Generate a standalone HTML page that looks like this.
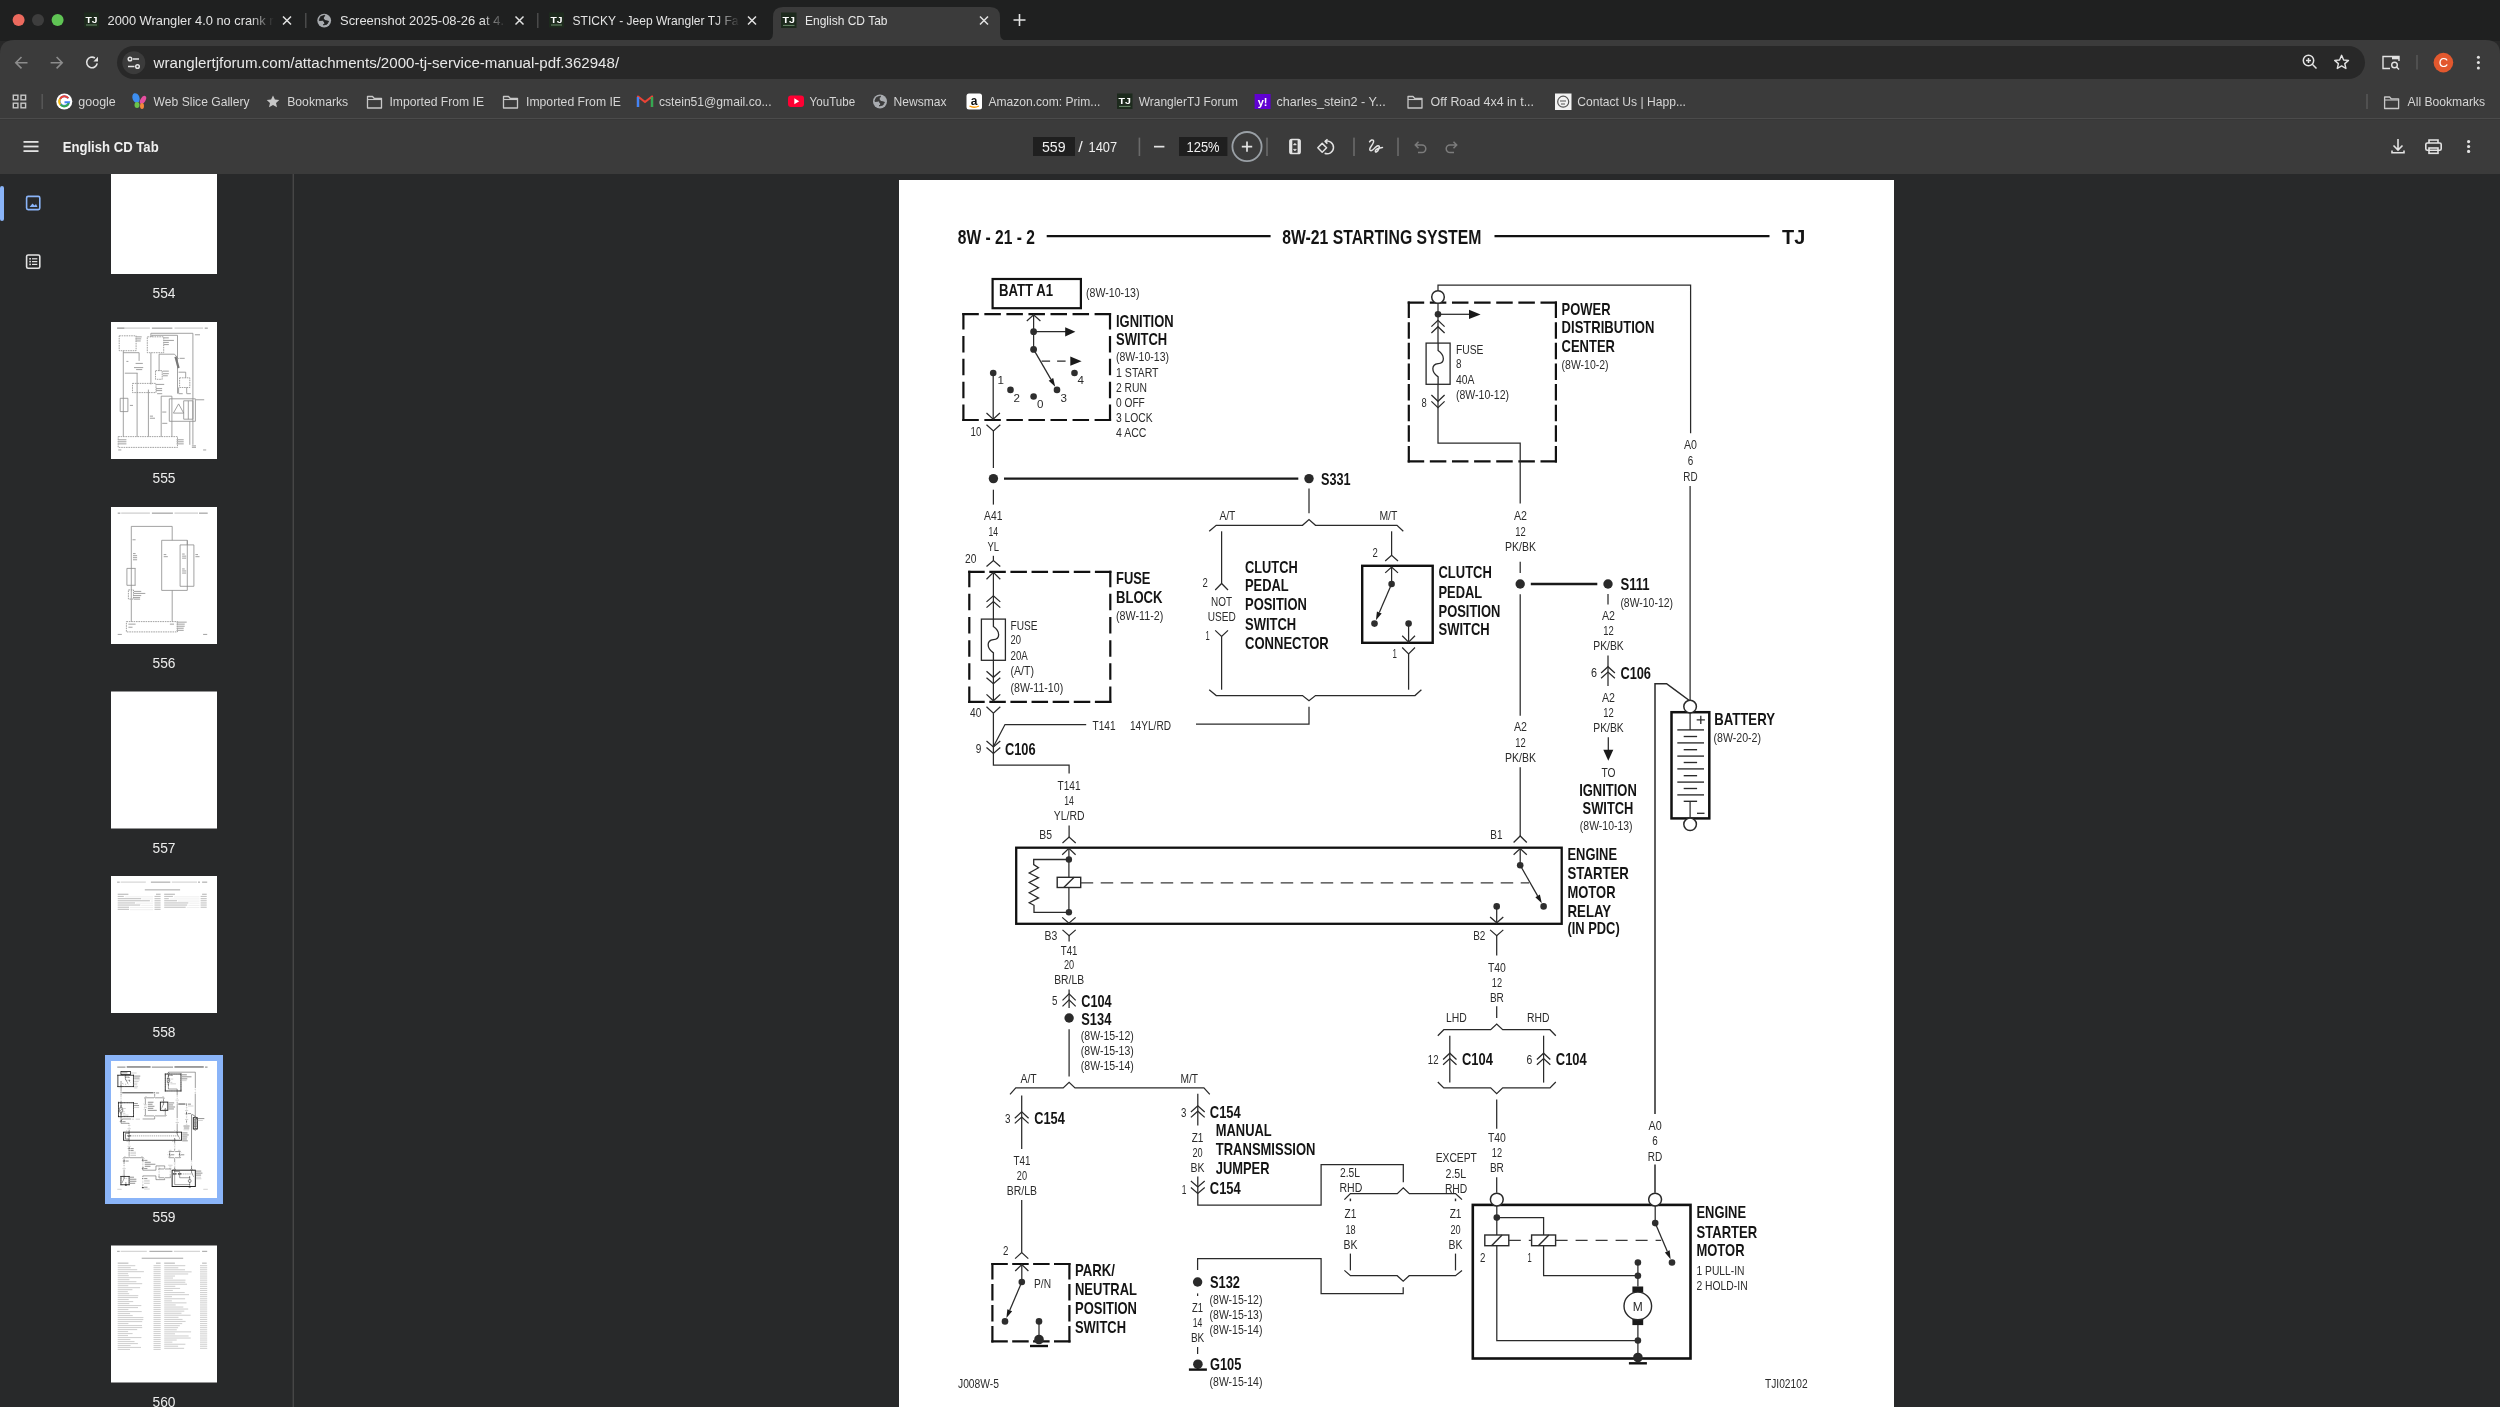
<!DOCTYPE html>
<html><head><meta charset="utf-8"><title>English CD Tab</title>
<style>html,body{margin:0;padding:0;background:#282828;overflow:hidden;width:2500px;height:1407px}text{font-family:"Liberation Sans", sans-serif}</style>
</head><body>
<svg width="2500" height="1407" viewBox="0 0 2500 1407" style="display:block;will-change:transform;font-family:'Liberation Sans', sans-serif">
<rect x="0" y="0" width="2500" height="41" fill="#1f2020"/>
<circle cx="18.6" cy="20" r="6" fill="#ec6a5e"/>
<circle cx="38" cy="20" r="6" fill="#3d3d3d"/>
<circle cx="57.6" cy="20" r="6" fill="#5fc454"/>
<defs><linearGradient id="fadeT" x1="0" x2="1"><stop offset="0" stop-color="#1f2020" stop-opacity="0"/><stop offset="1" stop-color="#1f2020" stop-opacity="1"/></linearGradient></defs>
<rect x="84" y="12.5" width="15" height="15" fill="#1d2a1d"/><text x="91.5" y="22.700000000000003" font-size="9.3" font-weight="bold" fill="#fff" text-anchor="middle" textLength="12.0" lengthAdjust="spacingAndGlyphs">TJ</text><rect x="86" y="24.5" width="11" height="1" fill="#6a8a6a"/>
<text x="107.5" y="25" font-size="13.5" fill="#e3e3e3" textLength="166" lengthAdjust="spacingAndGlyphs">2000 Wrangler 4.0 no crank r</text>
<rect x="250" y="8" width="24" height="24" fill="url(#fadeT)"/>
<path d="M283 16.5 L291 24.5 M291 16.5 L283 24.5" stroke="#e3e3e3" stroke-width="1.5"/>
<rect x="305" y="13" width="1.5" height="15" fill="#4a4a4a"/>
<circle cx="324.2" cy="20.6" r="6.9" fill="#a8abaf"/><path d="M319.30 19.70 L320.70 16.60 L324.80 15.30 L323.20 18.10 L324.50 20.30 L323.00 20.20 L319.30 20.60 Z M323.70 20.20 L328.60 21.30 L327.00 24.10 L323.30 25.00 L325.10 23.10 L323.90 21.90 Z" fill="#1f2020" stroke="#1f2020" stroke-width="0.90" stroke-linejoin="round"/>
<text x="340" y="25" font-size="13.5" fill="#e3e3e3" textLength="164" lengthAdjust="spacingAndGlyphs">Screenshot 2025-08-26 at 4.</text>
<rect x="482" y="8" width="24" height="24" fill="url(#fadeT)"/>
<path d="M515.5 16.5 L523.5 24.5 M523.5 16.5 L515.5 24.5" stroke="#e3e3e3" stroke-width="1.5"/>
<rect x="537" y="13" width="1.5" height="15" fill="#4a4a4a"/>
<rect x="549" y="12.5" width="15" height="15" fill="#1d2a1d"/><text x="556.5" y="22.700000000000003" font-size="9.3" font-weight="bold" fill="#fff" text-anchor="middle" textLength="12.0" lengthAdjust="spacingAndGlyphs">TJ</text><rect x="551" y="24.5" width="11" height="1" fill="#6a8a6a"/>
<text x="572.5" y="25" font-size="13.5" fill="#e3e3e3" textLength="166" lengthAdjust="spacingAndGlyphs">STICKY - Jeep Wrangler TJ Fa</text>
<rect x="716" y="8" width="24" height="24" fill="url(#fadeT)"/>
<path d="M748 16.5 L756 24.5 M756 16.5 L748 24.5" stroke="#e3e3e3" stroke-width="1.5"/>
<path d="M765 41 Q773 41 773 33 V17 Q773 7 783 7 H990 Q1000 7 1000 17 V33 Q1000 41 1008 41 Z" fill="#3b3b3b"/>
<rect x="781" y="12.5" width="15.5" height="15.5" fill="#1d2a1d"/><text x="788.75" y="23.04" font-size="9.61" font-weight="bold" fill="#fff" text-anchor="middle" textLength="12.4" lengthAdjust="spacingAndGlyphs">TJ</text><rect x="783" y="24.9" width="11.5" height="1" fill="#6a8a6a"/>
<text x="805" y="25" font-size="13.5" fill="#e8e8e8" textLength="82.5" lengthAdjust="spacingAndGlyphs">English CD Tab</text>
<path d="M980 16.5 L988 24.5 M988 16.5 L980 24.5" stroke="#e3e3e3" stroke-width="1.5"/>
<path d="M1019.5 14 V26 M1013.5 20 H1025.5" stroke="#e3e3e3" stroke-width="1.6"/>
<path d="M0 54 Q0 40 14 40 H2486 Q2500 40 2500 54 V119 H0 Z" fill="#3b3b3b"/>
<path d="M27.5 62.7 H16 M21.5 57 L15.8 62.7 L21.5 68.4" stroke="#8c8c8c" stroke-width="1.6" fill="none"/>
<path d="M50.6 62.7 H62 M56.6 57 L62.2 62.7 L56.6 68.4" stroke="#8c8c8c" stroke-width="1.6" fill="none"/>
<path d="M97.2 63.4 A5.3 5.3 0 1 1 94.9 58" stroke="#e3e3e3" stroke-width="1.6" fill="none"/><path d="M98 56.8 V61.6 L93.4 61.4 Z" fill="#e3e3e3"/>
<rect x="117" y="46" width="2248" height="33" rx="16.5" fill="#282828"/>
<circle cx="133.8" cy="62.7" r="11.5" fill="#3b3b3b"/>
<g stroke="#e3e3e3" stroke-width="1.5" fill="none"><circle cx="130" cy="59" r="1.8"/><path d="M133 59 H139"/><circle cx="137.5" cy="66.5" r="1.8"/><path d="M128 66.5 H134.5"/></g>
<text x="153.6" y="67.8" font-size="15.3" fill="#e8e8e8" textLength="465.5" lengthAdjust="spacingAndGlyphs">wranglertjforum.com/attachments/2000-tj-service-manual-pdf.362948/</text>
<g stroke="#e3e3e3" stroke-width="1.5" fill="none"><circle cx="2308.5" cy="60.5" r="5.2"/><path d="M2312.3 64.3 L2316.5 68.5 M2308.5 58 V63 M2306 60.5 H2311"/></g>
<path d="M2341.6 55.3 L2343.6 60 L2348.5 60.4 L2344.8 63.6 L2345.9 68.5 L2341.6 65.9 L2337.3 68.5 L2338.4 63.6 L2334.7 60.4 L2339.6 60 Z" stroke="#e3e3e3" stroke-width="1.4" fill="none" stroke-linejoin="round"/>
<g stroke="#e3e3e3" stroke-width="1.4" fill="none"><path d="M2390 68.5 H2383 V56.5 H2399 V61"/><circle cx="2394.5" cy="65" r="2.8"/><path d="M2396.6 67.1 L2399 69.5"/></g><rect x="2392" y="56.3" width="7" height="3" fill="#e3e3e3"/>
<rect x="2416.3" y="55" width="1.4" height="14.5" fill="#5a5a5a"/>
<circle cx="2443.4" cy="62.6" r="9.8" fill="#e2582e"/>
<text x="2443.4" y="67.4" font-size="13" fill="#fff" text-anchor="middle">C</text>
<g fill="#e3e3e3"><circle cx="2478.4" cy="57.2" r="1.5"/><circle cx="2478.4" cy="62.6" r="1.5"/><circle cx="2478.4" cy="68" r="1.5"/></g>
<g stroke="#c7c7c7" stroke-width="1.4" fill="none"><rect x="13.3" y="95.2" width="4.6" height="4.6"/><rect x="21" y="95.2" width="4.6" height="4.6"/><rect x="13.3" y="103.2" width="4.6" height="4.6"/><rect x="21" y="103.2" width="4.6" height="4.6"/></g>
<rect x="41.5" y="94" width="1.4" height="15" fill="#5a5a5a"/>
<circle cx="64.3" cy="101.5" r="8" fill="#fff"/>
<path d="M68.3 98.3 A4.8 4.8 0 1 0 69 102.3 H64.5" stroke="#4285f4" stroke-width="2" fill="none"/><path d="M68.3 98.3 A4.8 4.8 0 0 0 60 99" stroke="#ea4335" stroke-width="2" fill="none"/><path d="M60 99 A4.8 4.8 0 0 0 60.5 104.7" stroke="#fbbc05" stroke-width="2" fill="none"/><path d="M60.5 104.7 A4.8 4.8 0 0 0 68.8 103" stroke="#34a853" stroke-width="2" fill="none"/>
<text x="78.3" y="106.2" font-size="13.2" fill="#d5d5d5" textLength="37.5" lengthAdjust="spacingAndGlyphs">google</text>
<ellipse cx="136" cy="98" rx="3.5" ry="5" fill="#3d8ef0" transform="rotate(-20 136 98)"/><ellipse cx="143" cy="100" rx="2.5" ry="4.5" fill="#e54fa0" transform="rotate(30 143 100)"/><ellipse cx="137" cy="105" rx="2.5" ry="3" fill="#6bc24a"/><ellipse cx="142" cy="106" rx="2" ry="3" fill="#f4873b"/>
<text x="153.6" y="106.2" font-size="13.2" fill="#d5d5d5" textLength="96" lengthAdjust="spacingAndGlyphs">Web Slice Gallery</text>
<path d="M273 95.5 L274.9 99.6 L279.3 100 L276 102.9 L277 107.3 L273 105 L269 107.3 L270 102.9 L266.7 100 L271.1 99.6 Z" fill="#c7c7c7"/>
<text x="287.2" y="106.2" font-size="13.2" fill="#d5d5d5" textLength="61" lengthAdjust="spacingAndGlyphs">Bookmarks</text>
<path d="M367.5 96.5 h5 l1.6 1.8 h7.4 v9.7 h-14 z" fill="none" stroke="#c7c7c7" stroke-width="1.3" stroke-linejoin="round"/><path d="M367.5 99.5 h14" stroke="#c7c7c7" stroke-width="1.1"/>
<text x="389.5" y="106.2" font-size="13.2" fill="#d5d5d5" textLength="94.5" lengthAdjust="spacingAndGlyphs">Imported From IE</text>
<path d="M503.5 96.5 h5 l1.6 1.8 h7.4 v9.7 h-14 z" fill="none" stroke="#c7c7c7" stroke-width="1.3" stroke-linejoin="round"/><path d="M503.5 99.5 h14" stroke="#c7c7c7" stroke-width="1.1"/>
<text x="526" y="106.2" font-size="13.2" fill="#d5d5d5" textLength="95" lengthAdjust="spacingAndGlyphs">Imported From IE</text>
<path d="M638 107 V96.5 L645 102 L652 96.5 V107" stroke="#ea4335" stroke-width="2.2" fill="none" stroke-linejoin="round"/><path d="M638 107 V97" stroke="#4285f4" stroke-width="2.4"/><path d="M652 107 V97" stroke="#34a853" stroke-width="2.4"/>
<text x="659" y="106.2" font-size="13.2" fill="#d5d5d5" textLength="112.5" lengthAdjust="spacingAndGlyphs">cstein51@gmail.co...</text>
<rect x="788" y="95.5" width="16" height="11.5" rx="3" fill="#ff0033"/><path d="M794.3 98.2 L799.2 101.2 L794.3 104.2 Z" fill="#fff"/>
<text x="809.6" y="106.2" font-size="13.2" fill="#d5d5d5" textLength="45.5" lengthAdjust="spacingAndGlyphs">YouTube</text>
<circle cx="880" cy="101.5" r="7" fill="#a8abaf"/><path d="M875.03 100.59 L876.45 97.44 L880.61 96.12 L878.99 98.96 L880.30 101.20 L878.78 101.09 L875.03 101.50 Z M879.49 101.09 L884.46 102.21 L882.84 105.05 L879.09 105.96 L880.91 104.04 L879.70 102.82 Z" fill="#3b3b3b" stroke="#3b3b3b" stroke-width="0.91" stroke-linejoin="round"/>
<text x="893.5" y="106.2" font-size="13.2" fill="#d5d5d5" textLength="53" lengthAdjust="spacingAndGlyphs">Newsmax</text>
<rect x="966.5" y="93.5" width="15.5" height="16" rx="2.5" fill="#fff"/><text x="974.2" y="104.5" font-size="12" font-weight="bold" fill="#111" text-anchor="middle">a</text><path d="M969.5 106 Q974 108.5 979 106" stroke="#f90" stroke-width="1.3" fill="none"/>
<text x="988.4" y="106.2" font-size="13.2" fill="#d5d5d5" textLength="112" lengthAdjust="spacingAndGlyphs">Amazon.com: Prim...</text>
<rect x="1117" y="93.5" width="15.5" height="15.5" fill="#1d2a1d"/><text x="1124.75" y="104.04" font-size="9.61" font-weight="bold" fill="#fff" text-anchor="middle" textLength="12.4" lengthAdjust="spacingAndGlyphs">TJ</text><rect x="1119" y="105.9" width="11.5" height="1" fill="#6a8a6a"/>
<text x="1138.8" y="106.2" font-size="13.2" fill="#d5d5d5" textLength="99.2" lengthAdjust="spacingAndGlyphs">WranglerTJ Forum</text>
<rect x="1254.6" y="94" width="16" height="15" fill="#6001d2"/><text x="1262.6" y="105.5" font-size="11" font-weight="bold" fill="#fff" text-anchor="middle">y!</text>
<text x="1276.4" y="106.2" font-size="13.2" fill="#d5d5d5" textLength="109.4" lengthAdjust="spacingAndGlyphs">charles_stein2 - Y...</text>
<path d="M1408 96.5 h5 l1.6 1.8 h7.4 v9.7 h-14 z" fill="none" stroke="#c7c7c7" stroke-width="1.3" stroke-linejoin="round"/><path d="M1408 99.5 h14" stroke="#c7c7c7" stroke-width="1.1"/>
<text x="1430.6" y="106.2" font-size="13.2" fill="#d5d5d5" textLength="103.4" lengthAdjust="spacingAndGlyphs">Off Road 4x4 in t...</text>
<rect x="1555" y="93.5" width="16.5" height="16.5" fill="#f2f2f2"/><circle cx="1563.2" cy="101.7" r="5.5" fill="none" stroke="#555" stroke-width="1.2"/><path d="M1560 101 h6 M1561 104 h4" stroke="#555" stroke-width="1"/>
<text x="1577.2" y="106.2" font-size="13.2" fill="#d5d5d5" textLength="108.8" lengthAdjust="spacingAndGlyphs">Contact Us | Happ...</text>
<rect x="2366.3" y="94" width="1.4" height="15" fill="#5a5a5a"/>
<path d="M2384.6 97.0 h5 l1.6 1.8 h7.4 v9.7 h-14 z" fill="none" stroke="#c7c7c7" stroke-width="1.3" stroke-linejoin="round"/><path d="M2384.6 100.0 h14" stroke="#c7c7c7" stroke-width="1.1"/>
<text x="2407.6" y="106.2" font-size="13.2" fill="#d5d5d5" textLength="77.5" lengthAdjust="spacingAndGlyphs">All Bookmarks</text>
<rect x="0" y="118" width="2500" height="1.2" fill="#4b4b4b"/>
<rect x="0" y="119.2" width="2500" height="54.8" fill="#3b3b3b"/>
<g fill="#e3e3e3"><rect x="23.5" y="141" width="15" height="1.8"/><rect x="23.5" y="145.6" width="15" height="1.8"/><rect x="23.5" y="150.2" width="15" height="1.8"/></g>
<text x="62.7" y="151.7" font-size="14.5" fill="#f0f0f0" font-weight="600" textLength="96" lengthAdjust="spacingAndGlyphs">English CD Tab</text>
<rect x="1033" y="137" width="42" height="19" fill="#1f1f1f"/>
<text x="1042" y="152" font-size="14" fill="#f0f0f0" textLength="23.6" lengthAdjust="spacingAndGlyphs">559</text>
<text x="1078.2" y="152" font-size="14" fill="#f0f0f0" textLength="4.5" lengthAdjust="spacingAndGlyphs">/</text>
<text x="1088.6" y="152" font-size="14" fill="#f0f0f0" textLength="28.5" lengthAdjust="spacingAndGlyphs">1407</text>
<rect x="1138.6" y="137.6" width="1.6" height="18.4" fill="#6a6a6a"/>
<rect x="1154" y="145.8" width="10.4" height="1.7" fill="#e3e3e3"/>
<rect x="1179" y="137" width="48.4" height="19" fill="#1f1f1f"/>
<text x="1186.6" y="152" font-size="14" fill="#f0f0f0" textLength="33" lengthAdjust="spacingAndGlyphs">125%</text>
<circle cx="1247" cy="146.6" r="14.6" fill="none" stroke="#9aa0a6" stroke-width="1.8"/>
<path d="M1247 141.4 V151.8 M1241.8 146.6 H1252.2" stroke="#e3e3e3" stroke-width="1.7"/>
<rect x="1266.2" y="137.6" width="1.6" height="18.4" fill="#6a6a6a"/>
<rect x="1289.9" y="139.5" width="10.2" height="14" rx="1.8" fill="none" stroke="#e3e3e3" stroke-width="1.6"/>
<rect x="1290" y="140" width="2.3" height="13" fill="#e3e3e3"/><rect x="1297.6" y="140" width="2.3" height="13" fill="#e3e3e3"/>
<path d="M1293.4 144.9 L1294.9 143.2 L1296.4 144.9 Z M1293.4 149.3 L1294.9 151 L1296.4 149.3 Z" fill="#e3e3e3" stroke="#e3e3e3" stroke-width="0.6"/>
<path d="M1322.2 143.4 L1326.6 147.8 L1322.2 152.2 L1317.8 147.8 Z" fill="none" stroke="#e3e3e3" stroke-width="1.5" stroke-linejoin="round"/>
<path d="M1325.2 141.3 A6.4 6.4 0 1 1 1324.6 153.3" fill="none" stroke="#e3e3e3" stroke-width="1.5"/>
<path d="M1327.5 139.3 L1325.1 141.4 L1327.4 143.6" fill="none" stroke="#e3e3e3" stroke-width="1.5" stroke-linejoin="round"/>
<rect x="1353.2" y="137.6" width="1.6" height="18.4" fill="#6a6a6a"/>
<path d="M1369.6 141.8 Q1371.8 139 1373.3 140.3 Q1374.5 141.8 1371.2 146.2 Q1368.6 149.8 1370.6 150.6 Q1372 151 1375.5 147.2 Q1378.3 144.8 1379.2 146.2 Q1379.8 147.8 1377.6 151 Q1376 152.8 1375.4 151.6 Q1375 150 1377.8 148.6 Q1380 147.6 1382.5 147.4" stroke="#e3e3e3" stroke-width="1.5" fill="none" stroke-linecap="round" stroke-linejoin="round"/>
<rect x="1397.2" y="137.6" width="1.6" height="18.4" fill="#6a6a6a"/>
<path d="M1416 145 H1422 A3.8 3.8 0 0 1 1422 152.6 H1418 M1418.5 141.8 L1415.3 145 L1418.5 148.2" stroke="#7c7c7c" stroke-width="1.5" fill="none"/>
<path d="M1456 145 H1450 A3.8 3.8 0 0 0 1450 152.6 H1454 M1453.5 141.8 L1456.7 145 L1453.5 148.2" stroke="#7c7c7c" stroke-width="1.5" fill="none"/>
<path d="M2398 139 V150 M2393.5 145.5 L2398 150 L2402.5 145.5 M2392 150.5 V152.8 H2404 V150.5" stroke="#e3e3e3" stroke-width="1.6" fill="none"/>
<g stroke="#e3e3e3" stroke-width="1.6" fill="none"><path d="M2429 143 V140 H2438 V143"/><rect x="2425.8" y="143" width="15.4" height="7.2" rx="1.5"/><rect x="2429" y="148" width="9" height="5.3"/></g>
<g fill="#e3e3e3"><circle cx="2468.6" cy="141.6" r="1.6"/><circle cx="2468.6" cy="146.5" r="1.6"/><circle cx="2468.6" cy="151.4" r="1.6"/></g>
<rect x="0" y="174" width="2500" height="1233" fill="#28292a"/>
<rect x="292.6" y="174" width="1.3" height="1233" fill="#4a4a4a"/>
<rect x="0" y="186" width="4" height="35" rx="2" fill="#8ab4f8"/>
<g stroke="#8ab4f8" stroke-width="1.6" fill="none"><rect x="26.6" y="196.4" width="13.2" height="13.2" rx="1.5"/></g><path d="M29.5 207 L32.5 203.5 L34.5 205.5 L36 204 L37.5 207 Z" fill="#8ab4f8"/>
<g stroke="#e3e3e3" stroke-width="1.6" fill="none"><rect x="26.6" y="255" width="13.2" height="13.2" rx="1.5"/></g><g fill="#e3e3e3"><rect x="29.3" y="258" width="1.6" height="1.6"/><rect x="29.3" y="260.8" width="1.6" height="1.6"/><rect x="29.3" y="263.6" width="1.6" height="1.6"/><rect x="32" y="258.2" width="5.3" height="1.2"/><rect x="32" y="261" width="5.3" height="1.2"/><rect x="32" y="263.8" width="5.3" height="1.2"/></g>
<clipPath id="cv"><rect x="0" y="174" width="2500" height="1233"/></clipPath>
<clipPath id="sbclip"><rect x="0" y="174" width="292" height="1233"/></clipPath>
<g clip-path="url(#sbclip)">
<rect x="111" y="137" width="106" height="137" fill="#fff"/>
<text x="164" y="298" font-size="14" fill="#ececec" text-anchor="middle" textLength="23" lengthAdjust="spacingAndGlyphs">554</text>
<rect x="111" y="322" width="106" height="137" fill="#fff"/>
<text x="164" y="483" font-size="14" fill="#ececec" text-anchor="middle" textLength="23" lengthAdjust="spacingAndGlyphs">555</text>
<rect x="111" y="507" width="106" height="137" fill="#fff"/>
<text x="164" y="668" font-size="14" fill="#ececec" text-anchor="middle" textLength="23" lengthAdjust="spacingAndGlyphs">556</text>
<rect x="111" y="691.5" width="106" height="137" fill="#fff"/>
<text x="164" y="852.5" font-size="14" fill="#ececec" text-anchor="middle" textLength="23" lengthAdjust="spacingAndGlyphs">557</text>
<rect x="111" y="876" width="106" height="137" fill="#fff"/>
<text x="164" y="1037" font-size="14" fill="#ececec" text-anchor="middle" textLength="23" lengthAdjust="spacingAndGlyphs">558</text>
<rect x="111" y="1061" width="106" height="137" fill="#fff"/>
<text x="164" y="1222" font-size="14" fill="#ececec" text-anchor="middle" textLength="23" lengthAdjust="spacingAndGlyphs">559</text>
<rect x="111" y="1245.5" width="106" height="137" fill="#fff"/>
<text x="164" y="1406.5" font-size="14" fill="#ececec" text-anchor="middle" textLength="23" lengthAdjust="spacingAndGlyphs">560</text>
<path d="M117.1 328.1 L149.9 328.1 M174.5 328.1 L203.1 328.1" stroke="#999" stroke-width="0.6" fill="none"/>
<rect x="151.9" y="327.6" width="20.5" height="1.1" fill="#999"/>
<rect x="117.1" y="327.6" width="7.2" height="1.1" fill="#999"/>
<rect x="204.7" y="327.6" width="3.1" height="1.1" fill="#999"/>
<path d="M119.2 335.8 L136.1 335.8 L136.1 350.7 L119.2 350.7 L119.2 335.8 M147.3 336.8 L163.7 336.8 L163.7 352.7 L147.3 352.7 L147.3 336.8 M132.5 383.4 L156.0 383.4 L156.0 392.6 L132.5 392.6 L132.5 383.4 M155.5 370.6 L162.2 370.6 L162.2 379.3 L155.5 379.3 L155.5 370.6 M179.6 377.8 L189.8 377.8 L189.8 387.5 L179.6 387.5 L179.6 377.8 M118.2 436.6 L177.5 436.6 L177.5 447.4 L118.2 447.4 L118.2 436.6" stroke="#8c8c8c" stroke-width="0.8" fill="none" stroke-dasharray="1.6 0.8"/>
<path d="M150.9 336.8 L150.9 333.3 L192.9 333.3 L192.9 444.8 M151.9 336.8 L151.9 335.3 L177.5 335.3 L177.5 393.6 M123.3 350.7 L123.3 436.6 M123.3 352.7 L139.1 352.7 L139.1 360.9 M124.8 373.2 L137.6 373.2 M137.1 373.2 L137.1 436.6 M150.9 352.7 L150.9 384.4 M148.4 389.6 L148.4 436.6 M159.1 371.1 L159.1 354.2 L174.5 354.2 L178.6 358.8 M161.2 436.6 L161.2 396.2 L171.9 396.2 L171.9 436.6 M178.6 372.2 L185.7 372.2 L185.7 377.8 M169.3 398.8 L195.4 398.8 L195.4 421.3 L169.3 421.3 L169.3 398.8 M189.8 421.3 L189.8 444.8 M120.2 398.3 L127.9 398.3 L127.9 411.6 L120.2 411.6 L120.2 398.3 M178.6 387.5 L178.6 393.6 M186.7 387.5 L186.7 393.6 M173.4 413.1 L178.6 403.9 L183.7 413.1 L173.4 413.1 M183.7 400.8 L183.7 419.2 L192.9 419.2 L192.9 400.8 L183.7 400.8 M188.3 400.8 L188.3 419.2" stroke="#8a8a8a" stroke-width="0.8" fill="none"/>
<path d="M175.5 356.8 L178.6 368.1" stroke="#777" stroke-width="2.2" fill="none"/>
<rect x="135.6" y="336.3" width="6.1" height="1.1" fill="#aaa"/>
<rect x="135.6" y="338.3" width="5.6" height="1.1" fill="#aaa"/>
<rect x="135.6" y="340.4" width="5.1" height="1.1" fill="#aaa"/>
<rect x="163.7" y="337.3" width="5.1" height="1.1" fill="#aaa"/>
<rect x="163.7" y="339.9" width="10.2" height="1.1" fill="#aaa"/>
<rect x="163.7" y="341.9" width="5.1" height="1.1" fill="#aaa"/>
<rect x="163.7" y="344.0" width="5.1" height="1.1" fill="#aaa"/>
<rect x="135.6" y="362.9" width="7.2" height="1.1" fill="#aaa"/>
<rect x="134.0" y="367.0" width="9.2" height="1.1" fill="#aaa"/>
<rect x="136.1" y="369.0" width="6.1" height="1.1" fill="#aaa"/>
<rect x="162.7" y="370.6" width="6.1" height="1.1" fill="#aaa"/>
<rect x="162.7" y="373.1" width="6.1" height="1.1" fill="#aaa"/>
<rect x="162.7" y="375.2" width="5.1" height="1.1" fill="#aaa"/>
<rect x="156.0" y="383.9" width="8.2" height="1.1" fill="#aaa"/>
<rect x="156.0" y="388.0" width="6.1" height="1.1" fill="#aaa"/>
<rect x="156.0" y="390.0" width="6.1" height="1.1" fill="#aaa"/>
<rect x="157.1" y="393.1" width="5.1" height="1.1" fill="#aaa"/>
<rect x="179.6" y="357.8" width="5.1" height="1.1" fill="#aaa"/>
<rect x="178.6" y="393.1" width="4.1" height="1.1" fill="#aaa"/>
<rect x="186.7" y="393.1" width="4.1" height="1.1" fill="#aaa"/>
<rect x="196.0" y="399.2" width="8.2" height="1.1" fill="#aaa"/>
<rect x="149.9" y="415.6" width="3.1" height="1.1" fill="#aaa"/>
<rect x="149.9" y="417.7" width="5.1" height="1.1" fill="#aaa"/>
<rect x="162.2" y="411.5" width="4.1" height="1.1" fill="#aaa"/>
<rect x="162.2" y="422.8" width="5.1" height="1.1" fill="#aaa"/>
<rect x="118.2" y="439.2" width="8.2" height="1.1" fill="#aaa"/>
<rect x="118.2" y="441.2" width="8.2" height="1.1" fill="#aaa"/>
<rect x="118.2" y="443.3" width="8.2" height="1.1" fill="#aaa"/>
<rect x="176.5" y="439.2" width="7.2" height="1.1" fill="#aaa"/>
<rect x="176.5" y="441.2" width="7.2" height="1.1" fill="#aaa"/>
<rect x="176.5" y="443.3" width="7.2" height="1.1" fill="#aaa"/>
<rect x="191.9" y="445.3" width="4.1" height="1.1" fill="#aaa"/>
<rect x="191.9" y="446.8" width="4.1" height="1.1" fill="#aaa"/>
<rect x="118.2" y="449.4" width="3.1" height="1.1" fill="#aaa"/>
<rect x="203.1" y="449.4" width="3.1" height="1.1" fill="#aaa"/>
<rect x="126.4" y="360.9" width="2.0" height="1.1" fill="#aaa"/>
<rect x="129.9" y="404.9" width="3.1" height="1.1" fill="#aaa"/>
<rect x="194.9" y="334.2" width="5.1" height="1.1" fill="#aaa"/>
<path d="M121.2 513.1 L149.9 513.1 M174.5 513.1 L198.0 513.1" stroke="#999" stroke-width="0.6" fill="none"/>
<rect x="151.9" y="512.6" width="21.0" height="1.1" fill="#999"/>
<rect x="117.7" y="512.6" width="2.6" height="1.1" fill="#999"/>
<rect x="199.0" y="512.6" width="8.7" height="1.1" fill="#999"/>
<path d="M131.3 621.6 L131.3 526.4 L172.2 526.4 L172.2 540.3 M126.9 568.4 L135.6 568.4 M126.9 585.3 L135.6 585.3 M126.9 568.4 L126.9 585.3 M135.1 568.4 L135.1 585.3 M161.7 590.4 L161.7 540.3 L187.3 540.3 L187.3 590.4 L161.7 590.4 M187.3 540.3 L187.3 544.9 M180.1 544.9 L193.9 544.9 L193.9 586.3 L180.1 586.3 L180.1 544.9 M172.2 590.4 L172.2 621.6" stroke="#8a8a8a" stroke-width="0.8" fill="none"/>
<path d="M128.4 589.9 L133.5 589.9 L133.5 599.1 L128.4 599.1 L128.4 589.9 M126.4 621.6 L177.5 621.6 L177.5 631.9 L126.4 631.9 L126.4 621.6" stroke="#8a8a8a" stroke-width="0.8" fill="none" stroke-dasharray="1.6 0.8"/>
<rect x="133.0" y="553.0" width="2.6" height="1.1" fill="#aaa"/>
<rect x="133.0" y="555.1" width="4.1" height="1.1" fill="#aaa"/>
<rect x="133.0" y="557.1" width="4.1" height="1.1" fill="#aaa"/>
<rect x="133.0" y="559.2" width="4.1" height="1.1" fill="#aaa"/>
<rect x="163.7" y="554.0" width="2.6" height="1.1" fill="#aaa"/>
<rect x="163.7" y="556.1" width="4.1" height="1.1" fill="#aaa"/>
<rect x="182.1" y="553.5" width="2.6" height="1.1" fill="#aaa"/>
<rect x="182.1" y="555.6" width="4.1" height="1.1" fill="#aaa"/>
<rect x="182.1" y="557.6" width="4.1" height="1.1" fill="#aaa"/>
<rect x="195.4" y="554.0" width="2.6" height="1.1" fill="#aaa"/>
<rect x="195.4" y="556.1" width="4.1" height="1.1" fill="#aaa"/>
<rect x="182.1" y="568.4" width="2.6" height="1.1" fill="#aaa"/>
<rect x="182.1" y="570.4" width="4.1" height="1.1" fill="#aaa"/>
<rect x="182.1" y="572.5" width="4.1" height="1.1" fill="#aaa"/>
<rect x="134.0" y="590.9" width="7.2" height="1.1" fill="#aaa"/>
<rect x="134.0" y="592.9" width="11.3" height="1.1" fill="#aaa"/>
<rect x="134.0" y="595.0" width="7.2" height="1.1" fill="#aaa"/>
<rect x="134.0" y="597.0" width="6.1" height="1.1" fill="#aaa"/>
<rect x="134.0" y="598.6" width="6.1" height="1.1" fill="#aaa"/>
<rect x="132.5" y="539.2" width="3.1" height="1.1" fill="#aaa"/>
<rect x="128.4" y="623.6" width="7.2" height="1.1" fill="#aaa"/>
<rect x="128.4" y="626.7" width="4.1" height="1.1" fill="#aaa"/>
<rect x="169.9" y="623.6" width="4.1" height="1.1" fill="#aaa"/>
<rect x="176.5" y="621.6" width="10.2" height="1.1" fill="#aaa"/>
<rect x="176.5" y="623.6" width="8.2" height="1.1" fill="#aaa"/>
<rect x="176.5" y="625.7" width="8.2" height="1.1" fill="#aaa"/>
<rect x="176.5" y="627.7" width="7.2" height="1.1" fill="#aaa"/>
<rect x="176.5" y="629.8" width="7.2" height="1.1" fill="#aaa"/>
<rect x="117.7" y="633.9" width="4.1" height="1.1" fill="#aaa"/>
<rect x="203.1" y="633.9" width="4.1" height="1.1" fill="#aaa"/>
<path d="M120.7 882.1 L145.8 882.1 M171.9 882.1 L197.0 882.1" stroke="#aaa" stroke-width="0.6" fill="none"/>
<rect x="150.9" y="881.6" width="19.4" height="1.1" fill="#a8a8a8"/>
<rect x="117.1" y="881.6" width="2.6" height="1.1" fill="#a8a8a8"/>
<rect x="198.0" y="881.6" width="2.0" height="1.1" fill="#a8a8a8"/>
<rect x="202.1" y="881.6" width="5.1" height="1.1" fill="#a8a8a8"/>
<rect x="144.8" y="889.3" width="35.3" height="1.1" fill="#b0b0b0"/>
<rect x="117.7" y="893.7" width="10.7" height="1.1" fill="#b8b8b8"/>
<rect x="156.0" y="893.7" width="4.6" height="1.1" fill="#b8b8b8"/>
<rect x="164.2" y="893.7" width="10.7" height="1.1" fill="#b8b8b8"/>
<rect x="202.1" y="893.7" width="4.6" height="1.1" fill="#b8b8b8"/>
<rect x="117.7" y="895.9" width="6.1" height="1.1" fill="#c4c4c4"/>
<rect x="154.5" y="895.9" width="6.1" height="1.1" fill="#c4c4c4"/>
<path d="M124.8 896.8 L153.0 896.8" stroke="#dadada" stroke-width="0.4" fill="none"/>
<rect x="117.7" y="898.1" width="23.5" height="1.1" fill="#c4c4c4"/>
<rect x="154.5" y="898.1" width="6.1" height="1.1" fill="#c4c4c4"/>
<path d="M142.2 898.9 L153.0 898.9" stroke="#dadada" stroke-width="0.4" fill="none"/>
<rect x="117.7" y="900.2" width="32.2" height="1.1" fill="#c4c4c4"/>
<rect x="154.5" y="900.2" width="6.1" height="1.1" fill="#c4c4c4"/>
<path d="M150.9 901.1 L153.0 901.1" stroke="#dadada" stroke-width="0.4" fill="none"/>
<rect x="117.7" y="902.4" width="17.4" height="1.1" fill="#c4c4c4"/>
<rect x="154.5" y="902.4" width="6.1" height="1.1" fill="#c4c4c4"/>
<path d="M136.1 903.2 L153.0 903.2" stroke="#dadada" stroke-width="0.4" fill="none"/>
<rect x="117.7" y="904.5" width="22.5" height="1.1" fill="#c4c4c4"/>
<rect x="154.5" y="904.5" width="6.1" height="1.1" fill="#c4c4c4"/>
<path d="M141.2 905.4 L153.0 905.4" stroke="#dadada" stroke-width="0.4" fill="none"/>
<rect x="117.7" y="906.7" width="11.3" height="1.1" fill="#c4c4c4"/>
<rect x="154.5" y="906.7" width="6.1" height="1.1" fill="#c4c4c4"/>
<path d="M129.9 907.5 L153.0 907.5" stroke="#dadada" stroke-width="0.4" fill="none"/>
<rect x="117.7" y="908.8" width="11.3" height="1.1" fill="#c4c4c4"/>
<rect x="154.5" y="908.8" width="6.1" height="1.1" fill="#c4c4c4"/>
<path d="M129.9 909.7 L153.0 909.7" stroke="#dadada" stroke-width="0.4" fill="none"/>
<rect x="164.2" y="895.9" width="8.7" height="1.1" fill="#c4c4c4"/>
<rect x="200.6" y="895.9" width="6.1" height="1.1" fill="#c4c4c4"/>
<path d="M173.9 896.8 L199.5 896.8" stroke="#dadada" stroke-width="0.4" fill="none"/>
<rect x="164.2" y="898.1" width="4.6" height="1.1" fill="#c4c4c4"/>
<rect x="200.6" y="898.1" width="6.1" height="1.1" fill="#c4c4c4"/>
<path d="M169.9 898.9 L199.5 898.9" stroke="#dadada" stroke-width="0.4" fill="none"/>
<rect x="164.2" y="900.2" width="12.8" height="1.1" fill="#c4c4c4"/>
<rect x="200.6" y="900.2" width="6.1" height="1.1" fill="#c4c4c4"/>
<path d="M178.0 901.1 L199.5 901.1" stroke="#dadada" stroke-width="0.4" fill="none"/>
<rect x="164.2" y="902.4" width="24.1" height="1.1" fill="#c4c4c4"/>
<rect x="200.6" y="902.4" width="6.1" height="1.1" fill="#c4c4c4"/>
<path d="M189.3 903.2 L199.5 903.2" stroke="#dadada" stroke-width="0.4" fill="none"/>
<rect x="164.2" y="904.5" width="23.0" height="1.1" fill="#c4c4c4"/>
<rect x="200.6" y="904.5" width="6.1" height="1.1" fill="#c4c4c4"/>
<path d="M188.3 905.4 L199.5 905.4" stroke="#dadada" stroke-width="0.4" fill="none"/>
<rect x="164.2" y="906.7" width="21.5" height="1.1" fill="#c4c4c4"/>
<rect x="200.6" y="906.7" width="6.1" height="1.1" fill="#c4c4c4"/>
<path d="M186.7 907.5 L199.5 907.5" stroke="#dadada" stroke-width="0.4" fill="none"/>
<path d="M120.7 1251.3 L146.8 1251.3 M173.9 1251.3 L200.0 1251.3" stroke="#aaa" stroke-width="0.6" fill="none"/>
<rect x="149.4" y="1250.8" width="23.0" height="1.1" fill="#a8a8a8"/>
<rect x="117.1" y="1250.8" width="2.6" height="1.1" fill="#a8a8a8"/>
<rect x="202.1" y="1250.8" width="5.1" height="1.1" fill="#a8a8a8"/>
<rect x="141.7" y="1257.7" width="41.5" height="1.1" fill="#b0b0b0"/>
<rect x="117.7" y="1262.6" width="10.7" height="1.1" fill="#b8b8b8"/>
<rect x="156.0" y="1262.6" width="4.6" height="1.1" fill="#b8b8b8"/>
<rect x="164.2" y="1262.6" width="10.7" height="1.1" fill="#b8b8b8"/>
<rect x="202.1" y="1262.6" width="4.6" height="1.1" fill="#b8b8b8"/>
<rect x="117.7" y="1265.1" width="17.6" height="1.1" fill="#d2d2d2"/>
<rect x="153.5" y="1265.1" width="7.2" height="1.1" fill="#d2d2d2"/>
<rect x="117.7" y="1267.1" width="13.1" height="1.1" fill="#d2d2d2"/>
<rect x="153.5" y="1267.1" width="7.2" height="1.1" fill="#d2d2d2"/>
<rect x="117.7" y="1269.1" width="19.5" height="1.1" fill="#d2d2d2"/>
<rect x="153.5" y="1269.1" width="7.2" height="1.1" fill="#d2d2d2"/>
<rect x="117.7" y="1271.1" width="26.2" height="1.1" fill="#d2d2d2"/>
<rect x="153.5" y="1271.1" width="7.2" height="1.1" fill="#d2d2d2"/>
<rect x="117.7" y="1273.1" width="10.4" height="1.1" fill="#d2d2d2"/>
<rect x="153.5" y="1273.1" width="7.2" height="1.1" fill="#d2d2d2"/>
<rect x="117.7" y="1275.1" width="11.1" height="1.1" fill="#d2d2d2"/>
<rect x="153.5" y="1275.1" width="7.2" height="1.1" fill="#d2d2d2"/>
<rect x="117.7" y="1277.1" width="23.2" height="1.1" fill="#d2d2d2"/>
<rect x="153.5" y="1277.1" width="7.2" height="1.1" fill="#d2d2d2"/>
<rect x="117.7" y="1279.1" width="11.7" height="1.1" fill="#d2d2d2"/>
<rect x="153.5" y="1279.1" width="7.2" height="1.1" fill="#d2d2d2"/>
<rect x="117.7" y="1281.1" width="18.7" height="1.1" fill="#d2d2d2"/>
<rect x="153.5" y="1281.1" width="7.2" height="1.1" fill="#d2d2d2"/>
<rect x="117.7" y="1283.1" width="24.5" height="1.1" fill="#d2d2d2"/>
<rect x="153.5" y="1283.1" width="7.2" height="1.1" fill="#d2d2d2"/>
<rect x="117.7" y="1285.1" width="10.6" height="1.1" fill="#d2d2d2"/>
<rect x="153.5" y="1285.1" width="7.2" height="1.1" fill="#d2d2d2"/>
<rect x="117.7" y="1287.1" width="22.4" height="1.1" fill="#d2d2d2"/>
<rect x="153.5" y="1287.1" width="7.2" height="1.1" fill="#d2d2d2"/>
<rect x="117.7" y="1289.1" width="14.7" height="1.1" fill="#d2d2d2"/>
<rect x="153.5" y="1289.1" width="7.2" height="1.1" fill="#d2d2d2"/>
<rect x="117.7" y="1291.1" width="10.1" height="1.1" fill="#d2d2d2"/>
<rect x="153.5" y="1291.1" width="7.2" height="1.1" fill="#d2d2d2"/>
<rect x="117.7" y="1293.1" width="11.5" height="1.1" fill="#d2d2d2"/>
<rect x="153.5" y="1293.1" width="7.2" height="1.1" fill="#d2d2d2"/>
<rect x="117.7" y="1295.1" width="20.6" height="1.1" fill="#d2d2d2"/>
<rect x="153.5" y="1295.1" width="7.2" height="1.1" fill="#d2d2d2"/>
<rect x="117.7" y="1297.0" width="20.2" height="1.1" fill="#d2d2d2"/>
<rect x="153.5" y="1297.0" width="7.2" height="1.1" fill="#d2d2d2"/>
<rect x="117.7" y="1299.0" width="11.0" height="1.1" fill="#d2d2d2"/>
<rect x="153.5" y="1299.0" width="7.2" height="1.1" fill="#d2d2d2"/>
<rect x="117.7" y="1301.0" width="15.5" height="1.1" fill="#d2d2d2"/>
<rect x="153.5" y="1301.0" width="7.2" height="1.1" fill="#d2d2d2"/>
<rect x="117.7" y="1303.0" width="11.6" height="1.1" fill="#d2d2d2"/>
<rect x="153.5" y="1303.0" width="7.2" height="1.1" fill="#d2d2d2"/>
<rect x="117.7" y="1305.0" width="23.6" height="1.1" fill="#d2d2d2"/>
<rect x="153.5" y="1305.0" width="7.2" height="1.1" fill="#d2d2d2"/>
<rect x="117.7" y="1307.0" width="20.3" height="1.1" fill="#d2d2d2"/>
<rect x="153.5" y="1307.0" width="7.2" height="1.1" fill="#d2d2d2"/>
<rect x="117.7" y="1309.0" width="10.7" height="1.1" fill="#d2d2d2"/>
<rect x="153.5" y="1309.0" width="7.2" height="1.1" fill="#d2d2d2"/>
<rect x="117.7" y="1311.0" width="24.0" height="1.1" fill="#d2d2d2"/>
<rect x="153.5" y="1311.0" width="7.2" height="1.1" fill="#d2d2d2"/>
<rect x="117.7" y="1313.0" width="12.4" height="1.1" fill="#d2d2d2"/>
<rect x="153.5" y="1313.0" width="7.2" height="1.1" fill="#d2d2d2"/>
<rect x="117.7" y="1315.0" width="15.0" height="1.1" fill="#d2d2d2"/>
<rect x="153.5" y="1315.0" width="7.2" height="1.1" fill="#d2d2d2"/>
<rect x="117.7" y="1317.0" width="25.7" height="1.1" fill="#d2d2d2"/>
<rect x="153.5" y="1317.0" width="7.2" height="1.1" fill="#d2d2d2"/>
<rect x="117.7" y="1319.0" width="25.6" height="1.1" fill="#d2d2d2"/>
<rect x="153.5" y="1319.0" width="7.2" height="1.1" fill="#d2d2d2"/>
<rect x="117.7" y="1321.0" width="24.5" height="1.1" fill="#d2d2d2"/>
<rect x="153.5" y="1321.0" width="7.2" height="1.1" fill="#d2d2d2"/>
<rect x="117.7" y="1323.0" width="10.7" height="1.1" fill="#d2d2d2"/>
<rect x="153.5" y="1323.0" width="7.2" height="1.1" fill="#d2d2d2"/>
<rect x="117.7" y="1325.0" width="24.3" height="1.1" fill="#d2d2d2"/>
<rect x="153.5" y="1325.0" width="7.2" height="1.1" fill="#d2d2d2"/>
<rect x="117.7" y="1327.0" width="24.5" height="1.1" fill="#d2d2d2"/>
<rect x="153.5" y="1327.0" width="7.2" height="1.1" fill="#d2d2d2"/>
<rect x="117.7" y="1329.0" width="19.5" height="1.1" fill="#d2d2d2"/>
<rect x="153.5" y="1329.0" width="7.2" height="1.1" fill="#d2d2d2"/>
<rect x="117.7" y="1331.0" width="10.4" height="1.1" fill="#d2d2d2"/>
<rect x="153.5" y="1331.0" width="7.2" height="1.1" fill="#d2d2d2"/>
<rect x="117.7" y="1333.0" width="14.9" height="1.1" fill="#d2d2d2"/>
<rect x="153.5" y="1333.0" width="7.2" height="1.1" fill="#d2d2d2"/>
<rect x="117.7" y="1335.0" width="10.3" height="1.1" fill="#d2d2d2"/>
<rect x="153.5" y="1335.0" width="7.2" height="1.1" fill="#d2d2d2"/>
<rect x="117.7" y="1337.0" width="23.7" height="1.1" fill="#d2d2d2"/>
<rect x="153.5" y="1337.0" width="7.2" height="1.1" fill="#d2d2d2"/>
<rect x="117.7" y="1339.0" width="12.7" height="1.1" fill="#d2d2d2"/>
<rect x="153.5" y="1339.0" width="7.2" height="1.1" fill="#d2d2d2"/>
<rect x="117.7" y="1341.0" width="16.8" height="1.1" fill="#d2d2d2"/>
<rect x="153.5" y="1341.0" width="7.2" height="1.1" fill="#d2d2d2"/>
<rect x="117.7" y="1343.0" width="20.2" height="1.1" fill="#d2d2d2"/>
<rect x="153.5" y="1343.0" width="7.2" height="1.1" fill="#d2d2d2"/>
<rect x="117.7" y="1345.0" width="12.9" height="1.1" fill="#d2d2d2"/>
<rect x="153.5" y="1345.0" width="7.2" height="1.1" fill="#d2d2d2"/>
<rect x="117.7" y="1346.9" width="23.3" height="1.1" fill="#d2d2d2"/>
<rect x="153.5" y="1346.9" width="7.2" height="1.1" fill="#d2d2d2"/>
<rect x="117.7" y="1348.9" width="12.3" height="1.1" fill="#d2d2d2"/>
<rect x="153.5" y="1348.9" width="7.2" height="1.1" fill="#d2d2d2"/>
<rect x="164.2" y="1265.1" width="21.1" height="1.1" fill="#d2d2d2"/>
<rect x="200.0" y="1265.1" width="7.2" height="1.1" fill="#d2d2d2"/>
<rect x="164.2" y="1267.2" width="14.1" height="1.1" fill="#d2d2d2"/>
<rect x="200.0" y="1267.2" width="7.2" height="1.1" fill="#d2d2d2"/>
<rect x="164.2" y="1269.2" width="20.8" height="1.1" fill="#d2d2d2"/>
<rect x="200.0" y="1269.2" width="7.2" height="1.1" fill="#d2d2d2"/>
<rect x="164.2" y="1271.3" width="27.4" height="1.1" fill="#d2d2d2"/>
<rect x="200.0" y="1271.3" width="7.2" height="1.1" fill="#d2d2d2"/>
<rect x="164.2" y="1273.4" width="24.0" height="1.1" fill="#d2d2d2"/>
<rect x="200.0" y="1273.4" width="7.2" height="1.1" fill="#d2d2d2"/>
<rect x="164.2" y="1275.5" width="10.8" height="1.1" fill="#d2d2d2"/>
<rect x="200.0" y="1275.5" width="7.2" height="1.1" fill="#d2d2d2"/>
<rect x="164.2" y="1277.5" width="8.8" height="1.1" fill="#d2d2d2"/>
<rect x="200.0" y="1277.5" width="7.2" height="1.1" fill="#d2d2d2"/>
<rect x="164.2" y="1279.6" width="21.3" height="1.1" fill="#d2d2d2"/>
<rect x="200.0" y="1279.6" width="7.2" height="1.1" fill="#d2d2d2"/>
<rect x="164.2" y="1281.7" width="21.1" height="1.1" fill="#d2d2d2"/>
<rect x="200.0" y="1281.7" width="7.2" height="1.1" fill="#d2d2d2"/>
<rect x="164.2" y="1283.7" width="22.8" height="1.1" fill="#d2d2d2"/>
<rect x="200.0" y="1283.7" width="7.2" height="1.1" fill="#d2d2d2"/>
<rect x="164.2" y="1285.8" width="11.1" height="1.1" fill="#d2d2d2"/>
<rect x="200.0" y="1285.8" width="7.2" height="1.1" fill="#d2d2d2"/>
<rect x="164.2" y="1287.9" width="15.9" height="1.1" fill="#d2d2d2"/>
<rect x="200.0" y="1287.9" width="7.2" height="1.1" fill="#d2d2d2"/>
<rect x="164.2" y="1289.9" width="8.6" height="1.1" fill="#d2d2d2"/>
<rect x="200.0" y="1289.9" width="7.2" height="1.1" fill="#d2d2d2"/>
<rect x="164.2" y="1292.0" width="20.5" height="1.1" fill="#d2d2d2"/>
<rect x="200.0" y="1292.0" width="7.2" height="1.1" fill="#d2d2d2"/>
<rect x="164.2" y="1294.1" width="24.8" height="1.1" fill="#d2d2d2"/>
<rect x="200.0" y="1294.1" width="7.2" height="1.1" fill="#d2d2d2"/>
<rect x="164.2" y="1296.1" width="7.8" height="1.1" fill="#d2d2d2"/>
<rect x="200.0" y="1296.1" width="7.2" height="1.1" fill="#d2d2d2"/>
<rect x="164.2" y="1298.2" width="20.9" height="1.1" fill="#d2d2d2"/>
<rect x="200.0" y="1298.2" width="7.2" height="1.1" fill="#d2d2d2"/>
<rect x="164.2" y="1300.3" width="7.7" height="1.1" fill="#d2d2d2"/>
<rect x="200.0" y="1300.3" width="7.2" height="1.1" fill="#d2d2d2"/>
<rect x="164.2" y="1302.3" width="22.3" height="1.1" fill="#d2d2d2"/>
<rect x="200.0" y="1302.3" width="7.2" height="1.1" fill="#d2d2d2"/>
<rect x="164.2" y="1304.4" width="11.5" height="1.1" fill="#d2d2d2"/>
<rect x="200.0" y="1304.4" width="7.2" height="1.1" fill="#d2d2d2"/>
<rect x="164.2" y="1306.5" width="19.1" height="1.1" fill="#d2d2d2"/>
<rect x="200.0" y="1306.5" width="7.2" height="1.1" fill="#d2d2d2"/>
<rect x="164.2" y="1308.5" width="24.0" height="1.1" fill="#d2d2d2"/>
<rect x="200.0" y="1308.5" width="7.2" height="1.1" fill="#d2d2d2"/>
<rect x="164.2" y="1310.6" width="20.1" height="1.1" fill="#d2d2d2"/>
<rect x="200.0" y="1310.6" width="7.2" height="1.1" fill="#d2d2d2"/>
<rect x="164.2" y="1312.7" width="17.3" height="1.1" fill="#d2d2d2"/>
<rect x="200.0" y="1312.7" width="7.2" height="1.1" fill="#d2d2d2"/>
<rect x="164.2" y="1314.7" width="26.4" height="1.1" fill="#d2d2d2"/>
<rect x="200.0" y="1314.7" width="7.2" height="1.1" fill="#d2d2d2"/>
<rect x="164.2" y="1316.8" width="14.3" height="1.1" fill="#d2d2d2"/>
<rect x="200.0" y="1316.8" width="7.2" height="1.1" fill="#d2d2d2"/>
<rect x="164.2" y="1318.9" width="18.3" height="1.1" fill="#d2d2d2"/>
<rect x="200.0" y="1318.9" width="7.2" height="1.1" fill="#d2d2d2"/>
<rect x="164.2" y="1320.9" width="21.4" height="1.1" fill="#d2d2d2"/>
<rect x="200.0" y="1320.9" width="7.2" height="1.1" fill="#d2d2d2"/>
<rect x="164.2" y="1323.0" width="18.0" height="1.1" fill="#d2d2d2"/>
<rect x="200.0" y="1323.0" width="7.2" height="1.1" fill="#d2d2d2"/>
<rect x="164.2" y="1325.1" width="15.6" height="1.1" fill="#d2d2d2"/>
<rect x="200.0" y="1325.1" width="7.2" height="1.1" fill="#d2d2d2"/>
<rect x="164.2" y="1327.1" width="13.9" height="1.1" fill="#d2d2d2"/>
<rect x="200.0" y="1327.1" width="7.2" height="1.1" fill="#d2d2d2"/>
<rect x="164.2" y="1329.2" width="12.6" height="1.1" fill="#d2d2d2"/>
<rect x="200.0" y="1329.2" width="7.2" height="1.1" fill="#d2d2d2"/>
<rect x="164.2" y="1331.3" width="26.9" height="1.1" fill="#d2d2d2"/>
<rect x="200.0" y="1331.3" width="7.2" height="1.1" fill="#d2d2d2"/>
<rect x="164.2" y="1333.3" width="10.8" height="1.1" fill="#d2d2d2"/>
<rect x="200.0" y="1333.3" width="7.2" height="1.1" fill="#d2d2d2"/>
<rect x="164.2" y="1335.4" width="24.4" height="1.1" fill="#d2d2d2"/>
<rect x="200.0" y="1335.4" width="7.2" height="1.1" fill="#d2d2d2"/>
<rect x="164.2" y="1337.5" width="26.5" height="1.1" fill="#d2d2d2"/>
<rect x="200.0" y="1337.5" width="7.2" height="1.1" fill="#d2d2d2"/>
<rect x="164.2" y="1339.5" width="12.5" height="1.1" fill="#d2d2d2"/>
<rect x="200.0" y="1339.5" width="7.2" height="1.1" fill="#d2d2d2"/>
<rect x="164.2" y="1341.6" width="8.2" height="1.1" fill="#d2d2d2"/>
<rect x="200.0" y="1341.6" width="7.2" height="1.1" fill="#d2d2d2"/>
<rect x="164.2" y="1343.7" width="21.2" height="1.1" fill="#d2d2d2"/>
<rect x="200.0" y="1343.7" width="7.2" height="1.1" fill="#d2d2d2"/>
<rect x="164.2" y="1345.7" width="13.9" height="1.1" fill="#d2d2d2"/>
<rect x="200.0" y="1345.7" width="7.2" height="1.1" fill="#d2d2d2"/>
<rect x="164.2" y="1347.8" width="19.9" height="1.1" fill="#d2d2d2"/>
<rect x="200.0" y="1347.8" width="7.2" height="1.1" fill="#d2d2d2"/>
<rect x="108" y="1058" width="112" height="143" fill="none" stroke="#8ab4f8" stroke-width="6"/>
<g transform="translate(111 1061) scale(0.10653) translate(-899 -180)"><rect x="957.8" y="231.6" width="77.0" height="12.0" fill="#9c9c9c"/>
<path d="M1046.70 236.10 L1270.60 236.10" stroke="#111" stroke-width="7.59" fill="none"/>
<rect x="1282.2" y="231.6" width="199.2" height="12.0" fill="#9c9c9c"/>
<path d="M1494.50 236.10 L1769.50 236.10" stroke="#111" stroke-width="7.59" fill="none"/>
<rect x="1782.0" y="231.6" width="23.2" height="12.0" fill="#9c9c9c"/>
<rect x="992.6" y="279" width="88.30" height="29.20" fill="none" stroke="#111" stroke-width="7.26"/>
<rect x="999.0" y="286.0" width="54.2" height="10.0" fill="#9c9c9c"/>
<rect x="1086.0" y="288.3" width="53.5" height="8.2" fill="#cdcdcd"/>
<path d="M963.40 314.20 L977.70 314.20 M985.45 314.20 L999.75 314.20 M1007.50 314.20 L1021.80 314.20 M1029.55 314.20 L1043.85 314.20 M1051.60 314.20 L1065.90 314.20 M1073.65 314.20 L1087.95 314.20 M1095.70 314.20 L1110.00 314.20" stroke="#111" stroke-width="7.26" fill="none" stroke-linecap="square"/>
<path d="M1110.00 314.20 L1110.00 328.50 M1110.00 337.07 L1110.00 351.38 M1110.00 359.95 L1110.00 374.25 M1110.00 382.82 L1110.00 397.12 M1110.00 405.70 L1110.00 420.00" stroke="#111" stroke-width="7.26" fill="none" stroke-linecap="square"/>
<path d="M1110.00 420.00 L1095.70 420.00 M1087.95 420.00 L1073.65 420.00 M1065.90 420.00 L1051.60 420.00 M1043.85 420.00 L1029.55 420.00 M1021.80 420.00 L1007.50 420.00 M999.75 420.00 L985.45 420.00 M977.70 420.00 L963.40 420.00" stroke="#111" stroke-width="7.26" fill="none" stroke-linecap="square"/>
<path d="M963.40 420.00 L963.40 405.70 M963.40 397.12 L963.40 382.82 M963.40 374.25 L963.40 359.95 M963.40 351.38 L963.40 337.07 M963.40 328.50 L963.40 314.20" stroke="#111" stroke-width="7.26" fill="none" stroke-linecap="square"/>
<path d="M1033.60 314.20 L1033.60 349.40" stroke="#2a2a2a" stroke-width="4.12" fill="none"/>
<path d="M1026.80 321.00 L1033.60 314.80 L1040.40 321.00" stroke="#2a2a2a" stroke-width="4.12" fill="none"/>
<circle cx="1033.6" cy="331.7" r="3.4" fill="#2e2e2e"/>
<path d="M1033.60 331.70 L1066.00 331.70" stroke="#2a2a2a" stroke-width="4.12" fill="none"/>
<path d="M1065.20 327.20 L1075.40 331.80 L1065.20 336.40 Z" fill="#1a1a1a"/>
<circle cx="1033.6" cy="349.4" r="3.4" fill="#2e2e2e"/>
<path d="M1033.60 349.40 L1050.95 379.42" stroke="#2a2a2a" stroke-width="4.12" fill="none"/>
<path d="M1055.20 386.78 L1048.70 380.72 L1053.20 378.12 Z" fill="#1a1a1a"/>
<path d="M1041.6 361.2 H1075" stroke="#2a2a2a" stroke-width="4.29" fill="none" stroke-dasharray="8.5 7"/>
<path d="M1070.30 356.60 L1081.60 361.20 L1070.30 365.80 Z" fill="#1a1a1a"/>
<circle cx="993.2" cy="373" r="3.3" fill="#2e2e2e"/>
<circle cx="1010.5" cy="389.9" r="3.3" fill="#2e2e2e"/>
<circle cx="1033.6" cy="396.5" r="3.3" fill="#2e2e2e"/>
<circle cx="1057" cy="389.9" r="3.3" fill="#2e2e2e"/>
<circle cx="1074.5" cy="373" r="3.3" fill="#2e2e2e"/>
<path d="M993.20 373.00 L993.20 419.50" stroke="#2a2a2a" stroke-width="4.12" fill="none"/>
<path d="M986.50 413.00 L993.20 419.20 L999.90 413.00" stroke="#2a2a2a" stroke-width="4.12" fill="none"/>
<rect x="997.4" y="377.0" width="5.8" height="7.2" fill="#cdcdcd"/>
<rect x="1013.6" y="394.8" width="5.8" height="7.2" fill="#cdcdcd"/>
<rect x="1036.9" y="401.0" width="5.8" height="7.2" fill="#cdcdcd"/>
<rect x="1060.4" y="394.8" width="5.8" height="7.2" fill="#cdcdcd"/>
<rect x="1077.6" y="377.0" width="5.8" height="7.2" fill="#cdcdcd"/>
<rect x="1116.0" y="316.6" width="57.6" height="10.2" fill="#9c9c9c"/>
<rect x="1116.0" y="335.2" width="51.2" height="10.2" fill="#9c9c9c"/>
<rect x="1116.0" y="353.1" width="53.0" height="8.2" fill="#cdcdcd"/>
<rect x="1116.0" y="368.8" width="42.6" height="8.2" fill="#cdcdcd"/>
<rect x="1116.0" y="383.8" width="31.0" height="8.2" fill="#cdcdcd"/>
<rect x="1116.0" y="398.8" width="28.8" height="8.2" fill="#cdcdcd"/>
<rect x="1116.0" y="413.6" width="36.7" height="8.2" fill="#cdcdcd"/>
<rect x="1116.0" y="428.4" width="30.5" height="8.2" fill="#cdcdcd"/>
<path d="M986.50 424.80 L993.40 431.00 L1000.30 424.80" stroke="#2a2a2a" stroke-width="4.12" fill="none"/>
<rect x="970.6" y="427.4" width="10.8" height="8.2" fill="#cdcdcd"/>
<path d="M993.40 431.00 L993.40 468.00" stroke="#2a2a2a" stroke-width="4.12" fill="none"/>
<circle cx="993.4" cy="478.6" r="4.7" fill="#2a2a2a"/>
<path d="M1004.00 478.60 L1298.30 478.60" stroke="#1a1a1a" stroke-width="7.59" fill="none"/>
<circle cx="1309" cy="478.6" r="4.7" fill="#2a2a2a"/>
<rect x="1321.0" y="474.8" width="29.6" height="10.2" fill="#9c9c9c"/>
<path d="M993.40 489.70 L993.40 504.60" stroke="#2a2a2a" stroke-width="4.12" fill="none"/>
<rect x="984.0" y="512.1" width="18.4" height="8.2" fill="#cdcdcd"/>
<rect x="988.4" y="527.4" width="9.6" height="8.2" fill="#cdcdcd"/>
<rect x="987.4" y="542.8" width="11.6" height="8.2" fill="#cdcdcd"/>
<path d="M993.40 555.80 L993.40 560.50" stroke="#2a2a2a" stroke-width="4.12" fill="none"/>
<rect x="965.0" y="555.2" width="11.4" height="8.2" fill="#cdcdcd"/>
<path d="M986.50 566.50 L993.40 560.50 L1000.30 566.50" stroke="#2a2a2a" stroke-width="4.12" fill="none"/>
<path d="M969.30 571.80 L983.60 571.80 M990.42 571.80 L1004.72 571.80 M1011.53 571.80 L1025.83 571.80 M1032.65 571.80 L1046.95 571.80 M1053.77 571.80 L1068.07 571.80 M1074.88 571.80 L1089.18 571.80 M1096.00 571.80 L1110.30 571.80" stroke="#111" stroke-width="7.26" fill="none" stroke-linecap="square"/>
<path d="M1110.30 571.80 L1110.30 586.10 M1110.30 594.96 L1110.30 609.26 M1110.30 618.12 L1110.30 632.42 M1110.30 641.28 L1110.30 655.58 M1110.30 664.44 L1110.30 678.74 M1110.30 687.60 L1110.30 701.90" stroke="#111" stroke-width="7.26" fill="none" stroke-linecap="square"/>
<path d="M1110.30 701.90 L1096.00 701.90 M1089.18 701.90 L1074.88 701.90 M1068.07 701.90 L1053.77 701.90 M1046.95 701.90 L1032.65 701.90 M1025.83 701.90 L1011.53 701.90 M1004.72 701.90 L990.42 701.90 M983.60 701.90 L969.30 701.90" stroke="#111" stroke-width="7.26" fill="none" stroke-linecap="square"/>
<path d="M969.30 701.90 L969.30 687.60 M969.30 678.74 L969.30 664.44 M969.30 655.58 L969.30 641.28 M969.30 632.42 L969.30 618.12 M969.30 609.26 L969.30 594.96 M969.30 586.10 L969.30 571.80" stroke="#111" stroke-width="7.26" fill="none" stroke-linecap="square"/>
<path d="M986.50 579.30 L993.40 572.40 L1000.30 579.30" stroke="#2a2a2a" stroke-width="4.12" fill="none"/>
<path d="M993.40 572.40 L993.40 619.10" stroke="#2a2a2a" stroke-width="4.12" fill="none"/>
<path d="M986.50 601.90 L993.40 595.90 L1000.30 601.90" stroke="#2a2a2a" stroke-width="4.12" fill="none"/>
<path d="M986.50 607.60 L993.40 601.60 L1000.30 607.60" stroke="#2a2a2a" stroke-width="4.12" fill="none"/>
<rect x="981.4" y="619.1" width="24.00" height="41.20" fill="#fff" stroke="#2a2a2a" stroke-width="4.29"/>
<path d="M993.4 619.1 V626.516 C1000.4 631.46 1000.4 638.876 993.4 639.7 C986.4 640.524 986.4 647.9399999999999 993.4 652.884 V660.3" stroke="#2a2a2a" stroke-width="4.29" fill="none"/>
<path d="M993.40 660.30 L993.40 700.80" stroke="#2a2a2a" stroke-width="4.12" fill="none"/>
<path d="M986.50 671.30 L993.40 677.30 L1000.30 671.30" stroke="#2a2a2a" stroke-width="4.12" fill="none"/>
<path d="M986.50 677.70 L993.40 683.70 L1000.30 677.70" stroke="#2a2a2a" stroke-width="4.12" fill="none"/>
<path d="M986.50 694.40 L993.40 700.80 L1000.30 694.40" stroke="#2a2a2a" stroke-width="4.12" fill="none"/>
<rect x="1010.5" y="621.3" width="27.0" height="8.2" fill="#cdcdcd"/>
<rect x="1010.5" y="636.2" width="10.5" height="8.2" fill="#cdcdcd"/>
<rect x="1010.5" y="651.8" width="17.3" height="8.2" fill="#cdcdcd"/>
<rect x="1010.5" y="666.7" width="23.5" height="8.2" fill="#cdcdcd"/>
<rect x="1010.5" y="683.5" width="52.7" height="8.2" fill="#cdcdcd"/>
<rect x="1116.0" y="574.0" width="34.5" height="10.2" fill="#9c9c9c"/>
<rect x="1116.0" y="593.0" width="46.5" height="10.2" fill="#9c9c9c"/>
<rect x="1116.0" y="612.1" width="47.3" height="8.2" fill="#cdcdcd"/>
<path d="M986.50 706.80 L993.40 713.20 L1000.30 706.80" stroke="#2a2a2a" stroke-width="4.12" fill="none"/>
<rect x="970.0" y="708.7" width="11.3" height="8.2" fill="#cdcdcd"/>
<path d="M993.40 713.20 L993.40 765.00 L1069.10 765.00 L1069.10 773.60" stroke="#2a2a2a" stroke-width="4.12" fill="none"/>
<path d="M986.50 741.00 L993.40 747.00 L1000.30 741.00" stroke="#2a2a2a" stroke-width="4.12" fill="none"/>
<path d="M986.50 747.50 L993.40 753.50 L1000.30 747.50" stroke="#2a2a2a" stroke-width="4.12" fill="none"/>
<path d="M993.60 746.20 L1005.00 724.50 L1086.20 724.50" stroke="#2a2a2a" stroke-width="4.12" fill="none"/>
<rect x="975.7" y="744.9" width="5.6" height="8.2" fill="#cdcdcd"/>
<rect x="1005.0" y="744.3" width="30.6" height="10.2" fill="#9c9c9c"/>
<rect x="1092.6" y="721.6" width="23.0" height="8.2" fill="#cdcdcd"/>
<rect x="1130.0" y="721.6" width="41.0" height="8.2" fill="#cdcdcd"/>
<path d="M1196.00 724.20 L1309.00 724.20 L1309.00 706.80" stroke="#2a2a2a" stroke-width="4.12" fill="none"/>
<rect x="1057.6" y="781.7" width="23.0" height="8.2" fill="#cdcdcd"/>
<rect x="1064.3" y="796.9" width="9.6" height="8.2" fill="#cdcdcd"/>
<rect x="1053.8" y="812.0" width="30.7" height="8.2" fill="#cdcdcd"/>
<path d="M1069.10 825.40 L1069.10 837.00" stroke="#2a2a2a" stroke-width="4.12" fill="none"/>
<path d="M1062.50 843.00 L1069.10 837.00 L1075.70 843.00" stroke="#2a2a2a" stroke-width="4.12" fill="none"/>
<rect x="1039.3" y="831.2" width="12.7" height="8.2" fill="#cdcdcd"/>
<rect x="1016.2" y="847.7" width="545.50" height="76.10" fill="none" stroke="#111" stroke-width="7.59"/>
<path d="M1062.20 854.70 L1068.90 848.30 L1075.60 854.70" stroke="#2a2a2a" stroke-width="4.12" fill="none"/>
<path d="M1068.90 848.30 L1068.90 912.30" stroke="#2a2a2a" stroke-width="4.12" fill="none"/>
<circle cx="1068.9" cy="859.5" r="3.2" fill="#2e2e2e"/>
<circle cx="1068.9" cy="912.3" r="3.2" fill="#2e2e2e"/>
<path d="M1068.9 859.5 H1033.7 V864.6 L1038.5 867.8 L1029.2 873 L1038.5 877.7 L1029.2 882.5 L1038.5 887.7 L1029.2 892.8 L1038.5 897.9 L1029.2 902.7 L1034 905.3 V912.3 H1068.9" stroke="#2a2a2a" stroke-width="4.29" fill="none"/>
<rect x="1057.2" y="877.3" width="23.50" height="10.20" fill="#fff" stroke="#2a2a2a" stroke-width="4.62"/>
<path d="M1063.78 887.50 L1074.12 877.30" stroke="#2a2a2a" stroke-width="4.62" fill="none"/>
<path d="M1080.7 882.9 H1529" stroke="#3a3a3a" stroke-width="4.12" fill="none" stroke-dasharray="12.5 7.5"/>
<path d="M1062.20 917.40 L1068.90 923.20 L1075.60 917.40" stroke="#2a2a2a" stroke-width="4.12" fill="none"/>
<path d="M1062.50 929.90 L1069.10 935.60 L1075.70 929.90" stroke="#2a2a2a" stroke-width="4.12" fill="none"/>
<path d="M1069.10 935.60 L1069.10 941.60" stroke="#2a2a2a" stroke-width="4.12" fill="none"/>
<rect x="1044.6" y="931.4" width="12.8" height="8.2" fill="#cdcdcd"/>
<rect x="1060.8" y="946.3" width="16.6" height="8.2" fill="#cdcdcd"/>
<rect x="1064.0" y="961.2" width="10.2" height="8.2" fill="#cdcdcd"/>
<rect x="1054.1" y="976.1" width="29.9" height="8.2" fill="#cdcdcd"/>
<path d="M1513.60 842.50 L1520.20 836.00 L1526.80 842.50" stroke="#2a2a2a" stroke-width="4.12" fill="none"/>
<path d="M1513.60 854.70 L1520.20 848.50 L1526.80 854.70" stroke="#2a2a2a" stroke-width="4.12" fill="none"/>
<path d="M1520.20 848.50 L1520.20 865.30" stroke="#2a2a2a" stroke-width="4.12" fill="none"/>
<circle cx="1520.2" cy="865.3" r="3.3" fill="#2e2e2e"/>
<path d="M1520.20 865.30 L1537.61 895.88" stroke="#2a2a2a" stroke-width="4.12" fill="none"/>
<path d="M1541.82 903.27 L1535.35 897.17 L1539.87 894.60 Z" fill="#1a1a1a"/>
<circle cx="1543.6" cy="906.4" r="3.3" fill="#2e2e2e"/>
<circle cx="1496.7" cy="906.4" r="3.3" fill="#2e2e2e"/>
<path d="M1496.70 906.40 L1496.70 922.80" stroke="#2a2a2a" stroke-width="4.12" fill="none"/>
<path d="M1490.10 917.00 L1496.70 922.80 L1503.30 917.00" stroke="#2a2a2a" stroke-width="4.12" fill="none"/>
<path d="M1490.10 929.90 L1496.70 935.60 L1503.30 929.90" stroke="#2a2a2a" stroke-width="4.12" fill="none"/>
<path d="M1496.70 935.60 L1496.70 955.50" stroke="#2a2a2a" stroke-width="4.12" fill="none"/>
<rect x="1473.2" y="931.4" width="12.2" height="8.2" fill="#cdcdcd"/>
<rect x="1487.9" y="963.4" width="18.0" height="8.2" fill="#cdcdcd"/>
<rect x="1491.8" y="978.3" width="10.2" height="8.2" fill="#cdcdcd"/>
<rect x="1489.9" y="993.8" width="14.0" height="8.2" fill="#cdcdcd"/>
<rect x="1490.3" y="831.2" width="12.2" height="8.2" fill="#cdcdcd"/>
<rect x="1567.5" y="849.9" width="49.5" height="10.2" fill="#9c9c9c"/>
<rect x="1567.5" y="869.0" width="61.4" height="10.2" fill="#9c9c9c"/>
<rect x="1567.5" y="887.8" width="48.0" height="10.2" fill="#9c9c9c"/>
<rect x="1567.5" y="906.9" width="43.7" height="10.2" fill="#9c9c9c"/>
<rect x="1567.5" y="924.0" width="52.2" height="10.2" fill="#9c9c9c"/>
<path d="M1069.10 989.60 L1069.10 1008.00" stroke="#2a2a2a" stroke-width="4.12" fill="none"/>
<path d="M1062.50 1000.40 L1069.10 993.90 L1075.70 1000.40" stroke="#2a2a2a" stroke-width="4.12" fill="none"/>
<path d="M1062.50 1006.40 L1069.10 999.90 L1075.70 1006.40" stroke="#2a2a2a" stroke-width="4.12" fill="none"/>
<rect x="1052.0" y="997.1" width="5.4" height="8.2" fill="#cdcdcd"/>
<rect x="1081.3" y="996.6" width="30.4" height="10.2" fill="#9c9c9c"/>
<circle cx="1069.1" cy="1018" r="4.7" fill="#2a2a2a"/>
<rect x="1081.3" y="1014.3" width="30.0" height="10.2" fill="#9c9c9c"/>
<rect x="1080.8" y="1031.7" width="53.0" height="8.2" fill="#cdcdcd"/>
<rect x="1080.8" y="1046.9" width="53.0" height="8.2" fill="#cdcdcd"/>
<rect x="1080.8" y="1062.1" width="53.0" height="8.2" fill="#cdcdcd"/>
<path d="M1069.10 1029.30 L1069.10 1076.60" stroke="#2a2a2a" stroke-width="4.12" fill="none"/>
<path d="M1010.00 1094.30 L1015.80 1087.90 L1063.20 1087.90 L1069.10 1082.40 L1075.00 1087.90 L1203.90 1087.90 L1209.80 1094.30" stroke="#2a2a2a" stroke-width="4.12" fill="none"/>
<rect x="1020.5" y="1074.9" width="16.2" height="8.2" fill="#cdcdcd"/>
<rect x="1180.4" y="1074.9" width="17.6" height="8.2" fill="#cdcdcd"/>
<path d="M1021.70 1095.40 L1021.70 1149.00" stroke="#2a2a2a" stroke-width="4.12" fill="none"/>
<path d="M1014.80 1118.20 L1021.70 1111.80 L1028.60 1118.20" stroke="#2a2a2a" stroke-width="4.12" fill="none"/>
<path d="M1014.80 1123.40 L1021.70 1117.00 L1028.60 1123.40" stroke="#2a2a2a" stroke-width="4.12" fill="none"/>
<rect x="1005.0" y="1114.4" width="5.5" height="8.2" fill="#cdcdcd"/>
<rect x="1034.3" y="1113.9" width="30.5" height="10.2" fill="#9c9c9c"/>
<rect x="1013.4" y="1156.6" width="17.0" height="8.2" fill="#cdcdcd"/>
<rect x="1016.8" y="1171.9" width="10.2" height="8.2" fill="#cdcdcd"/>
<rect x="1006.8" y="1186.9" width="30.2" height="8.2" fill="#cdcdcd"/>
<path d="M1021.70 1199.90 L1021.70 1252.60" stroke="#2a2a2a" stroke-width="4.12" fill="none"/>
<path d="M1015.10 1258.60 L1021.70 1252.60 L1028.30 1258.60" stroke="#2a2a2a" stroke-width="4.12" fill="none"/>
<rect x="1003.0" y="1247.2" width="5.4" height="8.2" fill="#cdcdcd"/>
<path d="M1197.80 1093.70 L1197.80 1125.60" stroke="#2a2a2a" stroke-width="4.12" fill="none"/>
<path d="M1190.90 1112.00 L1197.80 1105.80 L1204.70 1112.00" stroke="#2a2a2a" stroke-width="4.12" fill="none"/>
<path d="M1190.90 1117.40 L1197.80 1111.20 L1204.70 1117.40" stroke="#2a2a2a" stroke-width="4.12" fill="none"/>
<rect x="1181.0" y="1109.0" width="5.4" height="8.2" fill="#cdcdcd"/>
<rect x="1209.8" y="1108.1" width="30.9" height="10.2" fill="#9c9c9c"/>
<rect x="1191.7" y="1133.5" width="11.7" height="8.2" fill="#cdcdcd"/>
<rect x="1192.4" y="1148.9" width="10.2" height="8.2" fill="#cdcdcd"/>
<rect x="1190.5" y="1163.9" width="14.0" height="8.2" fill="#cdcdcd"/>
<rect x="1215.8" y="1125.8" width="55.9" height="10.2" fill="#9c9c9c"/>
<rect x="1215.8" y="1144.3" width="99.6" height="10.2" fill="#9c9c9c"/>
<rect x="1215.8" y="1163.5" width="53.7" height="10.2" fill="#9c9c9c"/>
<path d="M1197.80 1176.40 L1197.80 1205.20 L1321.10 1205.20 L1321.10 1164.50 L1403.30 1164.50 L1403.30 1182.20" stroke="#2a2a2a" stroke-width="4.12" fill="none"/>
<path d="M1190.90 1181.00 L1197.80 1187.00 L1204.70 1181.00" stroke="#2a2a2a" stroke-width="4.12" fill="none"/>
<path d="M1190.90 1187.50 L1197.80 1193.50 L1204.70 1187.50" stroke="#2a2a2a" stroke-width="4.12" fill="none"/>
<rect x="1181.7" y="1185.4" width="4.7" height="8.2" fill="#cdcdcd"/>
<rect x="1209.8" y="1184.2" width="30.9" height="10.2" fill="#9c9c9c"/>
<rect x="1340.0" y="1168.7" width="20.0" height="8.2" fill="#cdcdcd"/>
<rect x="1339.5" y="1183.6" width="22.8" height="8.2" fill="#cdcdcd"/>
<rect x="1435.7" y="1154.2" width="41.2" height="8.2" fill="#cdcdcd"/>
<rect x="1445.5" y="1169.8" width="20.7" height="8.2" fill="#cdcdcd"/>
<rect x="1444.9" y="1184.7" width="22.4" height="8.2" fill="#cdcdcd"/>
<path d="M1344.40 1199.60 L1350.40 1193.60 L1397.30 1193.60 L1403.30 1187.90 L1409.30 1193.60 L1455.50 1193.60 L1462.00 1199.60" stroke="#2a2a2a" stroke-width="4.12" fill="none"/>
<path d="M1350.40 1198.60 L1350.40 1201.20" stroke="#2a2a2a" stroke-width="4.62" fill="none"/>
<path d="M1455.50 1198.60 L1455.50 1201.20" stroke="#2a2a2a" stroke-width="4.62" fill="none"/>
<rect x="1344.6" y="1210.2" width="11.8" height="8.2" fill="#cdcdcd"/>
<rect x="1345.4" y="1225.6" width="10.2" height="8.2" fill="#cdcdcd"/>
<rect x="1343.5" y="1240.7" width="14.0" height="8.2" fill="#cdcdcd"/>
<rect x="1449.7" y="1210.2" width="11.8" height="8.2" fill="#cdcdcd"/>
<rect x="1450.5" y="1225.6" width="10.2" height="8.2" fill="#cdcdcd"/>
<rect x="1448.6" y="1240.7" width="14.0" height="8.2" fill="#cdcdcd"/>
<path d="M1350.40 1253.60 L1350.40 1270.40" stroke="#2a2a2a" stroke-width="4.12" fill="none"/>
<path d="M1455.50 1253.60 L1455.50 1270.40" stroke="#2a2a2a" stroke-width="4.12" fill="none"/>
<path d="M1344.40 1270.40 L1350.40 1275.70 L1397.20 1275.70 L1403.20 1281.20 L1409.20 1275.70 L1455.50 1275.70 L1462.00 1270.40" stroke="#2a2a2a" stroke-width="4.12" fill="none"/>
<path d="M1403.20 1287.20 L1403.20 1293.70 L1321.10 1293.70 L1321.10 1258.60 L1197.60 1258.60 L1197.60 1270.00" stroke="#2a2a2a" stroke-width="4.12" fill="none"/>
<path d="M992.40 1264.00 L1006.70 1264.00 M1013.30 1264.00 L1027.60 1264.00 M1034.20 1264.00 L1048.50 1264.00 M1055.10 1264.00 L1069.40 1264.00" stroke="#111" stroke-width="7.26" fill="none" stroke-linecap="square"/>
<path d="M1069.40 1264.00 L1069.40 1278.30 M1069.40 1285.03 L1069.40 1299.33 M1069.40 1306.07 L1069.40 1320.37 M1069.40 1327.10 L1069.40 1341.40" stroke="#111" stroke-width="7.26" fill="none" stroke-linecap="square"/>
<path d="M1069.40 1341.40 L1055.10 1341.40 M1048.50 1341.40 L1034.20 1341.40 M1027.60 1341.40 L1013.30 1341.40 M1006.70 1341.40 L992.40 1341.40" stroke="#111" stroke-width="7.26" fill="none" stroke-linecap="square"/>
<path d="M992.40 1341.40 L992.40 1327.10 M992.40 1320.37 L992.40 1306.07 M992.40 1299.33 L992.40 1285.03 M992.40 1278.30 L992.40 1264.00" stroke="#111" stroke-width="7.26" fill="none" stroke-linecap="square"/>
<path d="M1015.20 1271.00 L1021.80 1264.60 L1028.40 1271.00" stroke="#2a2a2a" stroke-width="4.12" fill="none"/>
<path d="M1021.80 1264.60 L1021.80 1282.00" stroke="#2a2a2a" stroke-width="4.12" fill="none"/>
<circle cx="1021.8" cy="1282" r="3.3" fill="#2e2e2e"/>
<path d="M1021.80 1282.00 L1009.75 1310.27" stroke="#2a2a2a" stroke-width="4.12" fill="none"/>
<path d="M1006.41 1318.09 L1007.35 1309.25 L1012.14 1311.29 Z" fill="#1a1a1a"/>
<circle cx="1005" cy="1321.4" r="3.3" fill="#2e2e2e"/>
<circle cx="1039" cy="1321.4" r="3.3" fill="#2e2e2e"/>
<path d="M1039.00 1321.40 L1039.00 1340.00" stroke="#2a2a2a" stroke-width="4.12" fill="none"/>
<circle cx="1039" cy="1339.5" r="4.8" fill="#2a2a2a"/>
<path d="M1030.00 1346.00 L1048.00 1346.00" stroke="#111" stroke-width="7.92" fill="none"/>
<rect x="1034.0" y="1280.0" width="17.0" height="8.2" fill="#cdcdcd"/>
<rect x="1075.0" y="1265.9" width="40.0" height="10.2" fill="#9c9c9c"/>
<rect x="1075.0" y="1284.9" width="62.0" height="10.2" fill="#9c9c9c"/>
<rect x="1075.0" y="1303.9" width="62.0" height="10.2" fill="#9c9c9c"/>
<rect x="1075.0" y="1322.9" width="51.0" height="10.2" fill="#9c9c9c"/>
<circle cx="1197.6" cy="1282" r="4.7" fill="#2a2a2a"/>
<rect x="1210.0" y="1278.0" width="30.0" height="10.2" fill="#9c9c9c"/>
<path d="M1197.60 1293.40 L1197.60 1296.00" stroke="#2a2a2a" stroke-width="4.12" fill="none"/>
<rect x="1192.1" y="1303.9" width="11.0" height="8.2" fill="#cdcdcd"/>
<rect x="1192.8" y="1318.9" width="9.6" height="8.2" fill="#cdcdcd"/>
<rect x="1190.9" y="1333.9" width="13.4" height="8.2" fill="#cdcdcd"/>
<path d="M1197.60 1347.00 L1197.60 1354.00" stroke="#2a2a2a" stroke-width="4.12" fill="none"/>
<circle cx="1197.9" cy="1364.2" r="4.8" fill="#2a2a2a"/>
<path d="M1188.90 1369.60 L1206.90 1369.60" stroke="#111" stroke-width="7.92" fill="none"/>
<rect x="1210.0" y="1359.9" width="31.4" height="10.2" fill="#9c9c9c"/>
<rect x="1209.6" y="1295.5" width="52.8" height="8.2" fill="#cdcdcd"/>
<rect x="1209.6" y="1310.7" width="52.8" height="8.2" fill="#cdcdcd"/>
<rect x="1209.6" y="1325.9" width="52.8" height="8.2" fill="#cdcdcd"/>
<rect x="1209.6" y="1377.7" width="52.8" height="8.2" fill="#cdcdcd"/>
<rect x="958.0" y="1379.8" width="41.0" height="8.2" fill="#cdcdcd"/>
<path d="M1438.00 290.60 L1438.00 285.10 L1690.60 285.10 L1690.60 433.30" stroke="#2a2a2a" stroke-width="4.12" fill="none"/>
<path d="M1408.80 302.60 L1423.10 302.60 M1430.93 302.60 L1445.23 302.60 M1453.07 302.60 L1467.37 302.60 M1475.20 302.60 L1489.50 302.60 M1497.33 302.60 L1511.63 302.60 M1519.47 302.60 L1533.77 302.60 M1541.60 302.60 L1555.90 302.60" stroke="#111" stroke-width="7.26" fill="none" stroke-linecap="square"/>
<path d="M1555.90 302.60 L1555.90 316.90 M1555.90 323.23 L1555.90 337.53 M1555.90 343.86 L1555.90 358.16 M1555.90 364.49 L1555.90 378.79 M1555.90 385.11 L1555.90 399.41 M1555.90 405.74 L1555.90 420.04 M1555.90 426.37 L1555.90 440.67 M1555.90 447.00 L1555.90 461.30" stroke="#111" stroke-width="7.26" fill="none" stroke-linecap="square"/>
<path d="M1555.90 461.30 L1541.60 461.30 M1533.77 461.30 L1519.47 461.30 M1511.63 461.30 L1497.33 461.30 M1489.50 461.30 L1475.20 461.30 M1467.37 461.30 L1453.07 461.30 M1445.23 461.30 L1430.93 461.30 M1423.10 461.30 L1408.80 461.30" stroke="#111" stroke-width="7.26" fill="none" stroke-linecap="square"/>
<path d="M1408.80 461.30 L1408.80 447.00 M1408.80 440.67 L1408.80 426.37 M1408.80 420.04 L1408.80 405.74 M1408.80 399.41 L1408.80 385.11 M1408.80 378.79 L1408.80 364.49 M1408.80 358.16 L1408.80 343.86 M1408.80 337.53 L1408.80 323.23 M1408.80 316.90 L1408.80 302.60" stroke="#111" stroke-width="7.26" fill="none" stroke-linecap="square"/>
<circle cx="1438" cy="297" r="6.3" fill="#fff" stroke="#2a2a2a" stroke-width="4.95"/>
<path d="M1438.00 303.50 L1438.00 343.10" stroke="#2a2a2a" stroke-width="4.12" fill="none"/>
<circle cx="1438" cy="314.3" r="3.3" fill="#2e2e2e"/>
<path d="M1438.00 314.30 L1470.00 314.30" stroke="#2a2a2a" stroke-width="4.12" fill="none"/>
<path d="M1469.00 309.70 L1480.60 314.40 L1469.00 319.10 Z" fill="#1a1a1a"/>
<path d="M1431.40 326.60 L1438.00 320.30 L1444.60 326.60" stroke="#2a2a2a" stroke-width="4.12" fill="none"/>
<path d="M1431.40 333.00 L1438.00 326.70 L1444.60 333.00" stroke="#2a2a2a" stroke-width="4.12" fill="none"/>
<rect x="1426.1" y="343.1" width="24.00" height="41.20" fill="#fff" stroke="#2a2a2a" stroke-width="4.29"/>
<path d="M1438.1 343.1 V350.516 C1445.1 355.46000000000004 1445.1 362.87600000000003 1438.1 363.70000000000005 C1431.1 364.524 1431.1 371.94 1438.1 376.884 V384.3" stroke="#2a2a2a" stroke-width="4.29" fill="none"/>
<path d="M1438.00 384.30 L1438.00 443.00 L1520.20 443.00 L1520.20 503.60" stroke="#2a2a2a" stroke-width="4.12" fill="none"/>
<path d="M1431.40 395.00 L1438.00 401.30 L1444.60 395.00" stroke="#2a2a2a" stroke-width="4.12" fill="none"/>
<path d="M1431.40 401.40 L1438.00 407.70 L1444.60 401.40" stroke="#2a2a2a" stroke-width="4.12" fill="none"/>
<rect x="1421.5" y="398.6" width="5.2" height="8.2" fill="#cdcdcd"/>
<rect x="1456.0" y="345.3" width="27.4" height="8.2" fill="#cdcdcd"/>
<rect x="1456.0" y="360.2" width="5.5" height="8.2" fill="#cdcdcd"/>
<rect x="1456.0" y="376.2" width="18.5" height="8.2" fill="#cdcdcd"/>
<rect x="1456.0" y="390.5" width="53.0" height="8.2" fill="#cdcdcd"/>
<rect x="1561.6" y="304.5" width="49.0" height="10.2" fill="#9c9c9c"/>
<rect x="1561.6" y="323.0" width="92.8" height="10.2" fill="#9c9c9c"/>
<rect x="1561.6" y="342.2" width="53.3" height="10.2" fill="#9c9c9c"/>
<rect x="1561.6" y="360.5" width="47.0" height="8.2" fill="#cdcdcd"/>
<rect x="1514.0" y="511.9" width="13.0" height="8.2" fill="#cdcdcd"/>
<rect x="1515.2" y="527.4" width="10.5" height="8.2" fill="#cdcdcd"/>
<rect x="1505.0" y="542.9" width="31.0" height="8.2" fill="#cdcdcd"/>
<path d="M1520.20 561.80 L1520.20 572.90" stroke="#2a2a2a" stroke-width="4.12" fill="none"/>
<circle cx="1520.2" cy="584" r="4.7" fill="#2a2a2a"/>
<path d="M1530.80 584.00 L1597.30 584.00" stroke="#1a1a1a" stroke-width="7.59" fill="none"/>
<circle cx="1608" cy="584" r="4.7" fill="#2a2a2a"/>
<rect x="1620.4" y="579.9" width="29.2" height="10.2" fill="#9c9c9c"/>
<rect x="1620.4" y="598.3" width="52.6" height="8.2" fill="#cdcdcd"/>
<path d="M1520.20 594.20 L1520.20 715.70" stroke="#2a2a2a" stroke-width="4.12" fill="none"/>
<rect x="1514.0" y="722.9" width="13.0" height="8.2" fill="#cdcdcd"/>
<rect x="1515.2" y="738.4" width="10.5" height="8.2" fill="#cdcdcd"/>
<rect x="1505.0" y="753.8" width="31.0" height="8.2" fill="#cdcdcd"/>
<path d="M1520.20 767.20 L1520.20 836.00" stroke="#2a2a2a" stroke-width="4.12" fill="none"/>
<path d="M1608.00 594.00 L1608.00 604.40" stroke="#2a2a2a" stroke-width="4.12" fill="none"/>
<rect x="1602.0" y="611.7" width="13.0" height="8.2" fill="#cdcdcd"/>
<rect x="1603.2" y="626.6" width="10.5" height="8.2" fill="#cdcdcd"/>
<rect x="1593.2" y="641.9" width="30.5" height="8.2" fill="#cdcdcd"/>
<path d="M1608.00 655.60 L1608.00 685.90" stroke="#2a2a2a" stroke-width="4.12" fill="none"/>
<path d="M1601.10 673.00 L1608.00 666.70 L1614.90 673.00" stroke="#2a2a2a" stroke-width="4.12" fill="none"/>
<path d="M1601.10 678.30 L1608.00 672.00 L1614.90 678.30" stroke="#2a2a2a" stroke-width="4.12" fill="none"/>
<rect x="1591.0" y="669.2" width="6.0" height="8.2" fill="#cdcdcd"/>
<rect x="1620.4" y="668.3" width="30.6" height="10.2" fill="#9c9c9c"/>
<rect x="1602.0" y="693.6" width="13.0" height="8.2" fill="#cdcdcd"/>
<rect x="1603.2" y="708.6" width="10.5" height="8.2" fill="#cdcdcd"/>
<rect x="1593.2" y="723.9" width="30.5" height="8.2" fill="#cdcdcd"/>
<path d="M1608.30 737.30 L1608.30 750.00" stroke="#2a2a2a" stroke-width="4.12" fill="none"/>
<path d="M1603.30 749.70 L1613.30 749.70 L1608.30 760.80 Z" fill="#1a1a1a"/>
<rect x="1601.5" y="768.9" width="14.0" height="8.2" fill="#cdcdcd"/>
<rect x="1579.2" y="785.4" width="57.6" height="10.2" fill="#9c9c9c"/>
<rect x="1582.6" y="803.9" width="50.8" height="10.2" fill="#9c9c9c"/>
<rect x="1579.9" y="821.9" width="52.7" height="8.2" fill="#cdcdcd"/>
<rect x="1684.0" y="441.2" width="13.0" height="8.2" fill="#cdcdcd"/>
<rect x="1687.8" y="457.2" width="5.5" height="8.2" fill="#cdcdcd"/>
<rect x="1683.3" y="472.4" width="14.3" height="8.2" fill="#cdcdcd"/>
<path d="M1690.10 485.90 L1690.10 700.30" stroke="#2a2a2a" stroke-width="4.12" fill="none"/>
<path d="M1655.00 1114.00 L1655.00 683.70 L1666.60 683.70 L1689.30 700.50" stroke="#2a2a2a" stroke-width="4.95" fill="none"/>
<rect x="1671.5" y="712.2" width="37.80" height="106.20" fill="none" stroke="#111" stroke-width="8.25"/>
<circle cx="1690.1" cy="706.6" r="6.3" fill="#fff" stroke="#2a2a2a" stroke-width="4.95"/>
<circle cx="1690.1" cy="824.3" r="6.3" fill="#fff" stroke="#2a2a2a" stroke-width="4.95"/>
<path d="M1690.10 712.20 L1690.10 729.90" stroke="#2a2a2a" stroke-width="4.12" fill="none"/>
<path d="M1690.10 801.30 L1690.10 818.40" stroke="#2a2a2a" stroke-width="4.12" fill="none"/>
<path d="M1677.30 729.90 L1704.00 729.90" stroke="#2a2a2a" stroke-width="4.46" fill="none"/>
<path d="M1677.30 742.90 L1704.00 742.90" stroke="#2a2a2a" stroke-width="4.46" fill="none"/>
<path d="M1677.30 756.10 L1704.00 756.10" stroke="#2a2a2a" stroke-width="4.46" fill="none"/>
<path d="M1677.30 768.90 L1704.00 768.90" stroke="#2a2a2a" stroke-width="4.46" fill="none"/>
<path d="M1677.30 782.10 L1704.00 782.10" stroke="#2a2a2a" stroke-width="4.46" fill="none"/>
<path d="M1677.30 794.90 L1704.00 794.90" stroke="#2a2a2a" stroke-width="4.46" fill="none"/>
<path d="M1683.70 736.50 L1697.10 736.50" stroke="#2a2a2a" stroke-width="4.46" fill="none"/>
<path d="M1683.70 749.70 L1697.10 749.70" stroke="#2a2a2a" stroke-width="4.46" fill="none"/>
<path d="M1683.70 762.50 L1697.10 762.50" stroke="#2a2a2a" stroke-width="4.46" fill="none"/>
<path d="M1683.70 775.70 L1697.10 775.70" stroke="#2a2a2a" stroke-width="4.46" fill="none"/>
<path d="M1683.70 788.50 L1697.10 788.50" stroke="#2a2a2a" stroke-width="4.46" fill="none"/>
<path d="M1683.70 801.30 L1697.10 801.30" stroke="#2a2a2a" stroke-width="4.46" fill="none"/>
<path d="M1700.8 715.8 V724 M1696.7 719.9 H1704.9" stroke="#2a2a2a" stroke-width="4.29" fill="none"/>
<path d="M1697.00 813.30 L1704.50 813.30" stroke="#2a2a2a" stroke-width="4.29" fill="none"/>
<rect x="1714.2" y="715.1" width="60.8" height="10.2" fill="#9c9c9c"/>
<rect x="1713.5" y="733.5" width="47.5" height="8.2" fill="#cdcdcd"/>
<rect x="1648.5" y="1121.9" width="13.2" height="8.2" fill="#cdcdcd"/>
<rect x="1652.3" y="1137.2" width="5.5" height="8.2" fill="#cdcdcd"/>
<rect x="1647.8" y="1152.7" width="14.5" height="8.2" fill="#cdcdcd"/>
<path d="M1655.00 1164.50 L1655.00 1192.80" stroke="#2a2a2a" stroke-width="4.95" fill="none"/>
<path d="M1496.70 1006.20 L1496.70 1018.00" stroke="#2a2a2a" stroke-width="4.12" fill="none"/>
<path d="M1437.80 1035.70 L1443.80 1029.70 L1490.70 1029.70 L1496.70 1024.00 L1502.70 1029.70 L1550.00 1029.70 L1555.80 1035.70" stroke="#2a2a2a" stroke-width="4.12" fill="none"/>
<rect x="1446.0" y="1013.7" width="20.8" height="8.2" fill="#cdcdcd"/>
<rect x="1527.0" y="1013.7" width="22.4" height="8.2" fill="#cdcdcd"/>
<path d="M1449.80 1035.70 L1449.80 1082.60" stroke="#2a2a2a" stroke-width="4.12" fill="none"/>
<path d="M1443.10 1059.50 L1449.80 1053.20 L1456.50 1059.50" stroke="#2a2a2a" stroke-width="4.12" fill="none"/>
<path d="M1443.10 1064.80 L1449.80 1058.50 L1456.50 1064.80" stroke="#2a2a2a" stroke-width="4.12" fill="none"/>
<path d="M1543.60 1035.70 L1543.60 1082.60" stroke="#2a2a2a" stroke-width="4.12" fill="none"/>
<path d="M1536.90 1059.50 L1543.60 1053.20 L1550.30 1059.50" stroke="#2a2a2a" stroke-width="4.12" fill="none"/>
<path d="M1536.90 1064.80 L1543.60 1058.50 L1550.30 1064.80" stroke="#2a2a2a" stroke-width="4.12" fill="none"/>
<rect x="1427.8" y="1055.7" width="10.7" height="8.2" fill="#cdcdcd"/>
<rect x="1462.0" y="1055.2" width="30.9" height="10.2" fill="#9c9c9c"/>
<rect x="1526.5" y="1055.7" width="5.8" height="8.2" fill="#cdcdcd"/>
<rect x="1555.8" y="1055.2" width="30.9" height="10.2" fill="#9c9c9c"/>
<path d="M1437.80 1082.00 L1443.80 1087.90 L1490.70 1087.90 L1496.70 1093.70 L1502.70 1087.90 L1550.00 1087.90 L1555.80 1082.00" stroke="#2a2a2a" stroke-width="4.12" fill="none"/>
<path d="M1496.70 1099.40 L1496.70 1128.80" stroke="#2a2a2a" stroke-width="4.12" fill="none"/>
<rect x="1487.9" y="1133.5" width="18.0" height="8.2" fill="#cdcdcd"/>
<rect x="1491.8" y="1148.9" width="10.2" height="8.2" fill="#cdcdcd"/>
<rect x="1489.9" y="1163.9" width="14.0" height="8.2" fill="#cdcdcd"/>
<path d="M1496.70 1177.20 L1496.70 1192.80" stroke="#2a2a2a" stroke-width="4.12" fill="none"/>
<rect x="1472.8" y="1204.9" width="217.70" height="153.60" fill="none" stroke="#111" stroke-width="8.58"/>
<circle cx="1496.8" cy="1199.6" r="6.4" fill="#fff" stroke="#2a2a2a" stroke-width="4.95"/>
<circle cx="1655.1" cy="1199.6" r="6.4" fill="#fff" stroke="#2a2a2a" stroke-width="4.95"/>
<path d="M1496.80 1206.00 L1496.80 1340.50 L1637.50 1340.50" stroke="#2a2a2a" stroke-width="4.12" fill="none"/>
<circle cx="1496.8" cy="1217.6" r="3.3" fill="#2e2e2e"/>
<path d="M1496.80 1217.60 L1543.60 1217.60 L1543.60 1275.70 L1637.50 1275.70" stroke="#2a2a2a" stroke-width="4.12" fill="none"/>
<rect x="1484.8" y="1235" width="24.00" height="10.70" fill="#fff" stroke="#2a2a2a" stroke-width="4.62"/>
<path d="M1491.52 1245.70 L1502.08 1235.00" stroke="#2a2a2a" stroke-width="4.62" fill="none"/>
<rect x="1531.6" y="1235" width="24.00" height="10.70" fill="#fff" stroke="#2a2a2a" stroke-width="4.62"/>
<path d="M1538.32 1245.70 L1548.88 1235.00" stroke="#2a2a2a" stroke-width="4.62" fill="none"/>
<path d="M1508.8 1240.4 H1531.6 M1555.6 1240.4 H1661.2" stroke="#3a3a3a" stroke-width="4.12" fill="none" stroke-dasharray="12 8"/>
<rect x="1480.0" y="1253.9" width="5.4" height="8.2" fill="#cdcdcd"/>
<rect x="1527.5" y="1253.9" width="4.2" height="8.2" fill="#cdcdcd"/>
<path d="M1655.20 1206.00 L1655.20 1223.10" stroke="#2a2a2a" stroke-width="4.12" fill="none"/>
<circle cx="1655.2" cy="1223.1" r="3.3" fill="#2e2e2e"/>
<path d="M1655.20 1223.10 L1667.25 1251.37" stroke="#2a2a2a" stroke-width="4.12" fill="none"/>
<path d="M1670.59 1259.19 L1664.86 1252.39 L1669.65 1250.35 Z" fill="#1a1a1a"/>
<circle cx="1672" cy="1262.5" r="3.3" fill="#2e2e2e"/>
<circle cx="1637.9" cy="1262.5" r="3.3" fill="#2e2e2e"/>
<path d="M1637.90 1262.50 L1637.90 1286.50" stroke="#2a2a2a" stroke-width="4.12" fill="none"/>
<circle cx="1637.9" cy="1275.7" r="3.3" fill="#2e2e2e"/>
<rect x="1632.4" y="1286.5" width="10.8" height="6.2" fill="#1a1a1a"/>
<rect x="1632.4" y="1318.9" width="10.8" height="6.2" fill="#1a1a1a"/>
<circle cx="1637.8" cy="1305.9" r="13.8" fill="#fff" stroke="#2a2a2a" stroke-width="4.62"/>
<rect x="1632.8" y="1302.8" width="10.0" height="8.2" fill="#cdcdcd"/>
<path d="M1637.90 1325.00 L1637.90 1358.00" stroke="#2a2a2a" stroke-width="4.12" fill="none"/>
<circle cx="1637.9" cy="1340.5" r="3.3" fill="#2e2e2e"/>
<circle cx="1637.9" cy="1357.5" r="4.8" fill="#2a2a2a"/>
<path d="M1628.90 1363.30 L1646.90 1363.30" stroke="#111" stroke-width="7.92" fill="none"/>
<rect x="1696.5" y="1208.2" width="49.5" height="10.2" fill="#9c9c9c"/>
<rect x="1696.5" y="1227.4" width="60.7" height="10.2" fill="#9c9c9c"/>
<rect x="1696.5" y="1245.9" width="48.0" height="10.2" fill="#9c9c9c"/>
<rect x="1696.5" y="1266.4" width="48.0" height="8.2" fill="#cdcdcd"/>
<rect x="1696.5" y="1281.5" width="51.1" height="8.2" fill="#cdcdcd"/>
<rect x="1765.0" y="1379.9" width="42.6" height="8.2" fill="#cdcdcd"/>
<path d="M1309.00 488.60 L1309.00 513.20" stroke="#2a2a2a" stroke-width="4.12" fill="none"/>
<path d="M1209.20 531.30 L1216.20 525.30 L1302.50 525.30 L1309.00 519.60 L1315.50 525.30 L1397.00 525.30 L1403.30 531.30" stroke="#2a2a2a" stroke-width="4.12" fill="none"/>
<rect x="1219.4" y="511.5" width="16.0" height="8.2" fill="#cdcdcd"/>
<rect x="1379.4" y="511.9" width="17.9" height="8.2" fill="#cdcdcd"/>
<path d="M1221.60 531.30 L1221.60 583.50" stroke="#2a2a2a" stroke-width="4.12" fill="none"/>
<path d="M1215.20 590.00 L1221.60 583.50 L1228.00 590.00" stroke="#2a2a2a" stroke-width="4.12" fill="none"/>
<rect x="1202.4" y="578.6" width="5.3" height="8.2" fill="#cdcdcd"/>
<rect x="1211.1" y="597.9" width="21.0" height="8.2" fill="#cdcdcd"/>
<rect x="1207.8" y="612.7" width="28.0" height="8.2" fill="#cdcdcd"/>
<path d="M1215.20 630.40 L1221.60 636.40 L1228.00 630.40" stroke="#2a2a2a" stroke-width="4.12" fill="none"/>
<path d="M1221.60 636.40 L1221.60 689.70" stroke="#2a2a2a" stroke-width="4.12" fill="none"/>
<rect x="1205.6" y="631.9" width="4.2" height="8.2" fill="#cdcdcd"/>
<rect x="1245.0" y="562.3" width="52.7" height="10.2" fill="#9c9c9c"/>
<rect x="1245.0" y="580.9" width="43.7" height="10.2" fill="#9c9c9c"/>
<rect x="1245.0" y="600.1" width="61.8" height="10.2" fill="#9c9c9c"/>
<rect x="1245.0" y="619.3" width="51.2" height="10.2" fill="#9c9c9c"/>
<rect x="1245.0" y="638.4" width="83.8" height="10.2" fill="#9c9c9c"/>
<path d="M1209.20 689.70 L1216.20 695.50 L1302.50 695.50 L1309.00 700.80 L1315.50 695.50 L1415.00 695.50 L1421.40 689.70" stroke="#2a2a2a" stroke-width="4.12" fill="none"/>
<rect x="1362.2" y="565.8" width="70.50" height="77.00" fill="none" stroke="#111" stroke-width="7.92"/>
<path d="M1391.60 531.30 L1391.60 555.40" stroke="#2a2a2a" stroke-width="4.12" fill="none"/>
<path d="M1385.20 561.00 L1391.60 555.40 L1398.00 561.00" stroke="#2a2a2a" stroke-width="4.12" fill="none"/>
<rect x="1372.4" y="548.9" width="5.3" height="8.2" fill="#cdcdcd"/>
<path d="M1385.20 572.90 L1391.60 567.00 L1398.00 572.90" stroke="#2a2a2a" stroke-width="4.12" fill="none"/>
<path d="M1391.60 567.00 L1391.60 584.00" stroke="#2a2a2a" stroke-width="4.12" fill="none"/>
<circle cx="1391.6" cy="584" r="3.3" fill="#2e2e2e"/>
<path d="M1391.60 584.00 L1379.30 612.49" stroke="#2a2a2a" stroke-width="4.12" fill="none"/>
<path d="M1375.93 620.29 L1376.91 611.46 L1381.68 613.52 Z" fill="#1a1a1a"/>
<circle cx="1374.5" cy="623.6" r="3.3" fill="#2e2e2e"/>
<circle cx="1408.6" cy="623.6" r="3.3" fill="#2e2e2e"/>
<path d="M1408.60 623.60 L1408.60 642.20" stroke="#2a2a2a" stroke-width="4.12" fill="none"/>
<path d="M1402.20 635.80 L1408.60 642.20 L1415.00 635.80" stroke="#2a2a2a" stroke-width="4.12" fill="none"/>
<path d="M1402.20 647.50 L1408.60 653.90 L1415.00 647.50" stroke="#2a2a2a" stroke-width="4.12" fill="none"/>
<path d="M1408.60 653.90 L1408.60 689.70" stroke="#2a2a2a" stroke-width="4.12" fill="none"/>
<rect x="1392.6" y="649.9" width="4.4" height="8.2" fill="#cdcdcd"/>
<rect x="1438.5" y="568.1" width="53.3" height="10.2" fill="#9c9c9c"/>
<rect x="1438.5" y="587.3" width="43.7" height="10.2" fill="#9c9c9c"/>
<rect x="1438.5" y="606.5" width="61.8" height="10.2" fill="#9c9c9c"/>
<rect x="1438.5" y="624.9" width="51.2" height="10.2" fill="#9c9c9c"/></g>
</g>
<g clip-path="url(#cv)">
<rect x="899" y="180" width="995" height="1300" fill="#fff"/>
<g id="diagram"><text x="957.8" y="243.6" font-size="19.4" fill="#141414" font-weight="bold" textLength="77" lengthAdjust="spacingAndGlyphs">8W - 21 - 2</text>
<path d="M1046.70 236.10 L1270.60 236.10" stroke="#111" stroke-width="2.3" fill="none"/>
<text x="1282.2" y="243.6" font-size="19.4" fill="#141414" font-weight="bold" textLength="199.2" lengthAdjust="spacingAndGlyphs">8W-21 STARTING SYSTEM</text>
<path d="M1494.50 236.10 L1769.50 236.10" stroke="#111" stroke-width="2.3" fill="none"/>
<text x="1782" y="243.6" font-size="19.4" fill="#141414" font-weight="bold" textLength="23.2" lengthAdjust="spacingAndGlyphs">TJ</text>
<rect x="992.6" y="279" width="88.30" height="29.20" fill="none" stroke="#111" stroke-width="2.2"/>
<text x="999" y="296" font-size="16.2" fill="#141414" font-weight="bold" textLength="54.2" lengthAdjust="spacingAndGlyphs">BATT A1</text>
<text x="1086" y="296.5" font-size="13.2" fill="#2b2b2b" textLength="53.5" lengthAdjust="spacingAndGlyphs">(8W-10-13)</text>
<path d="M963.40 314.20 L977.70 314.20 M985.45 314.20 L999.75 314.20 M1007.50 314.20 L1021.80 314.20 M1029.55 314.20 L1043.85 314.20 M1051.60 314.20 L1065.90 314.20 M1073.65 314.20 L1087.95 314.20 M1095.70 314.20 L1110.00 314.20" stroke="#111" stroke-width="2.2" fill="none" stroke-linecap="square"/>
<path d="M1110.00 314.20 L1110.00 328.50 M1110.00 337.07 L1110.00 351.38 M1110.00 359.95 L1110.00 374.25 M1110.00 382.82 L1110.00 397.12 M1110.00 405.70 L1110.00 420.00" stroke="#111" stroke-width="2.2" fill="none" stroke-linecap="square"/>
<path d="M1110.00 420.00 L1095.70 420.00 M1087.95 420.00 L1073.65 420.00 M1065.90 420.00 L1051.60 420.00 M1043.85 420.00 L1029.55 420.00 M1021.80 420.00 L1007.50 420.00 M999.75 420.00 L985.45 420.00 M977.70 420.00 L963.40 420.00" stroke="#111" stroke-width="2.2" fill="none" stroke-linecap="square"/>
<path d="M963.40 420.00 L963.40 405.70 M963.40 397.12 L963.40 382.82 M963.40 374.25 L963.40 359.95 M963.40 351.38 L963.40 337.07 M963.40 328.50 L963.40 314.20" stroke="#111" stroke-width="2.2" fill="none" stroke-linecap="square"/>
<path d="M1033.60 314.20 L1033.60 349.40" stroke="#2a2a2a" stroke-width="1.25" fill="none"/>
<path d="M1026.80 321.00 L1033.60 314.80 L1040.40 321.00" stroke="#2a2a2a" stroke-width="1.25" fill="none"/>
<circle cx="1033.6" cy="331.7" r="3.4" fill="#2e2e2e"/>
<path d="M1033.60 331.70 L1066.00 331.70" stroke="#2a2a2a" stroke-width="1.25" fill="none"/>
<path d="M1065.20 327.20 L1075.40 331.80 L1065.20 336.40 Z" fill="#1a1a1a"/>
<circle cx="1033.6" cy="349.4" r="3.4" fill="#2e2e2e"/>
<path d="M1033.60 349.40 L1050.95 379.42" stroke="#2a2a2a" stroke-width="1.25" fill="none"/>
<path d="M1055.20 386.78 L1048.70 380.72 L1053.20 378.12 Z" fill="#1a1a1a"/>
<path d="M1041.6 361.2 H1075" stroke="#2a2a2a" stroke-width="1.3" fill="none" stroke-dasharray="8.5 7"/>
<path d="M1070.30 356.60 L1081.60 361.20 L1070.30 365.80 Z" fill="#1a1a1a"/>
<circle cx="993.2" cy="373" r="3.3" fill="#2e2e2e"/>
<circle cx="1010.5" cy="389.9" r="3.3" fill="#2e2e2e"/>
<circle cx="1033.6" cy="396.5" r="3.3" fill="#2e2e2e"/>
<circle cx="1057" cy="389.9" r="3.3" fill="#2e2e2e"/>
<circle cx="1074.5" cy="373" r="3.3" fill="#2e2e2e"/>
<path d="M993.20 373.00 L993.20 419.50" stroke="#2a2a2a" stroke-width="1.25" fill="none"/>
<path d="M986.50 413.00 L993.20 419.20 L999.90 413.00" stroke="#2a2a2a" stroke-width="1.25" fill="none"/>
<text x="997.4" y="384.2" font-size="11.6" fill="#2b2b2b">1</text>
<text x="1013.6" y="402" font-size="11.6" fill="#2b2b2b">2</text>
<text x="1036.9" y="408.2" font-size="11.6" fill="#2b2b2b">0</text>
<text x="1060.4" y="402" font-size="11.6" fill="#2b2b2b">3</text>
<text x="1077.6" y="384.2" font-size="11.6" fill="#2b2b2b">4</text>
<text x="1116" y="326.8" font-size="16.4" fill="#141414" font-weight="bold" textLength="57.6" lengthAdjust="spacingAndGlyphs">IGNITION</text>
<text x="1116" y="345.4" font-size="16.4" fill="#141414" font-weight="bold" textLength="51.2" lengthAdjust="spacingAndGlyphs">SWITCH</text>
<text x="1116" y="361.3" font-size="13.2" fill="#2b2b2b" textLength="53" lengthAdjust="spacingAndGlyphs">(8W-10-13)</text>
<text x="1116" y="377" font-size="13.2" fill="#2b2b2b" textLength="42.6" lengthAdjust="spacingAndGlyphs">1 START</text>
<text x="1116" y="392" font-size="13.2" fill="#2b2b2b" textLength="31" lengthAdjust="spacingAndGlyphs">2 RUN</text>
<text x="1116" y="407" font-size="13.2" fill="#2b2b2b" textLength="28.8" lengthAdjust="spacingAndGlyphs">0 OFF</text>
<text x="1116" y="421.8" font-size="13.2" fill="#2b2b2b" textLength="36.7" lengthAdjust="spacingAndGlyphs">3 LOCK</text>
<text x="1116" y="436.6" font-size="13.2" fill="#2b2b2b" textLength="30.5" lengthAdjust="spacingAndGlyphs">4 ACC</text>
<path d="M986.50 424.80 L993.40 431.00 L1000.30 424.80" stroke="#2a2a2a" stroke-width="1.25" fill="none"/>
<text x="970.6" y="435.6" font-size="13.2" fill="#2b2b2b" textLength="10.8" lengthAdjust="spacingAndGlyphs">10</text>
<path d="M993.40 431.00 L993.40 468.00" stroke="#2a2a2a" stroke-width="1.25" fill="none"/>
<circle cx="993.4" cy="478.6" r="4.7" fill="#2a2a2a"/>
<path d="M1004.00 478.60 L1298.30 478.60" stroke="#1a1a1a" stroke-width="2.3" fill="none"/>
<circle cx="1309" cy="478.6" r="4.7" fill="#2a2a2a"/>
<text x="1321" y="485" font-size="16.4" fill="#141414" font-weight="bold" textLength="29.6" lengthAdjust="spacingAndGlyphs">S331</text>
<path d="M993.40 489.70 L993.40 504.60" stroke="#2a2a2a" stroke-width="1.25" fill="none"/>
<text x="993.2" y="520.3" font-size="13.2" fill="#2b2b2b" text-anchor="middle" textLength="18.4" lengthAdjust="spacingAndGlyphs">A41</text>
<text x="993.2" y="535.6" font-size="13.2" fill="#2b2b2b" text-anchor="middle" textLength="9.6" lengthAdjust="spacingAndGlyphs">14</text>
<text x="993.2" y="551" font-size="13.2" fill="#2b2b2b" text-anchor="middle" textLength="11.6" lengthAdjust="spacingAndGlyphs">YL</text>
<path d="M993.40 555.80 L993.40 560.50" stroke="#2a2a2a" stroke-width="1.25" fill="none"/>
<text x="965" y="563.4" font-size="13.2" fill="#2b2b2b" textLength="11.4" lengthAdjust="spacingAndGlyphs">20</text>
<path d="M986.50 566.50 L993.40 560.50 L1000.30 566.50" stroke="#2a2a2a" stroke-width="1.25" fill="none"/>
<path d="M969.30 571.80 L983.60 571.80 M990.42 571.80 L1004.72 571.80 M1011.53 571.80 L1025.83 571.80 M1032.65 571.80 L1046.95 571.80 M1053.77 571.80 L1068.07 571.80 M1074.88 571.80 L1089.18 571.80 M1096.00 571.80 L1110.30 571.80" stroke="#111" stroke-width="2.2" fill="none" stroke-linecap="square"/>
<path d="M1110.30 571.80 L1110.30 586.10 M1110.30 594.96 L1110.30 609.26 M1110.30 618.12 L1110.30 632.42 M1110.30 641.28 L1110.30 655.58 M1110.30 664.44 L1110.30 678.74 M1110.30 687.60 L1110.30 701.90" stroke="#111" stroke-width="2.2" fill="none" stroke-linecap="square"/>
<path d="M1110.30 701.90 L1096.00 701.90 M1089.18 701.90 L1074.88 701.90 M1068.07 701.90 L1053.77 701.90 M1046.95 701.90 L1032.65 701.90 M1025.83 701.90 L1011.53 701.90 M1004.72 701.90 L990.42 701.90 M983.60 701.90 L969.30 701.90" stroke="#111" stroke-width="2.2" fill="none" stroke-linecap="square"/>
<path d="M969.30 701.90 L969.30 687.60 M969.30 678.74 L969.30 664.44 M969.30 655.58 L969.30 641.28 M969.30 632.42 L969.30 618.12 M969.30 609.26 L969.30 594.96 M969.30 586.10 L969.30 571.80" stroke="#111" stroke-width="2.2" fill="none" stroke-linecap="square"/>
<path d="M986.50 579.30 L993.40 572.40 L1000.30 579.30" stroke="#2a2a2a" stroke-width="1.25" fill="none"/>
<path d="M993.40 572.40 L993.40 619.10" stroke="#2a2a2a" stroke-width="1.25" fill="none"/>
<path d="M986.50 601.90 L993.40 595.90 L1000.30 601.90" stroke="#2a2a2a" stroke-width="1.25" fill="none"/>
<path d="M986.50 607.60 L993.40 601.60 L1000.30 607.60" stroke="#2a2a2a" stroke-width="1.25" fill="none"/>
<rect x="981.4" y="619.1" width="24.00" height="41.20" fill="#fff" stroke="#2a2a2a" stroke-width="1.3"/>
<path d="M993.4 619.1 V626.516 C1000.4 631.46 1000.4 638.876 993.4 639.7 C986.4 640.524 986.4 647.9399999999999 993.4 652.884 V660.3" stroke="#2a2a2a" stroke-width="1.3" fill="none"/>
<path d="M993.40 660.30 L993.40 700.80" stroke="#2a2a2a" stroke-width="1.25" fill="none"/>
<path d="M986.50 671.30 L993.40 677.30 L1000.30 671.30" stroke="#2a2a2a" stroke-width="1.25" fill="none"/>
<path d="M986.50 677.70 L993.40 683.70 L1000.30 677.70" stroke="#2a2a2a" stroke-width="1.25" fill="none"/>
<path d="M986.50 694.40 L993.40 700.80 L1000.30 694.40" stroke="#2a2a2a" stroke-width="1.25" fill="none"/>
<text x="1010.5" y="629.5" font-size="13.2" fill="#2b2b2b" textLength="27" lengthAdjust="spacingAndGlyphs">FUSE</text>
<text x="1010.5" y="644.4" font-size="13.2" fill="#2b2b2b" textLength="10.5" lengthAdjust="spacingAndGlyphs">20</text>
<text x="1010.5" y="660" font-size="13.2" fill="#2b2b2b" textLength="17.3" lengthAdjust="spacingAndGlyphs">20A</text>
<text x="1010.5" y="674.9000000000001" font-size="13.2" fill="#2b2b2b" textLength="23.5" lengthAdjust="spacingAndGlyphs">(A/T)</text>
<text x="1010.5" y="691.7" font-size="13.2" fill="#2b2b2b" textLength="52.7" lengthAdjust="spacingAndGlyphs">(8W-11-10)</text>
<text x="1116" y="584.2" font-size="16.4" fill="#141414" font-weight="bold" textLength="34.5" lengthAdjust="spacingAndGlyphs">FUSE</text>
<text x="1116" y="603.2" font-size="16.4" fill="#141414" font-weight="bold" textLength="46.5" lengthAdjust="spacingAndGlyphs">BLOCK</text>
<text x="1116" y="620.3000000000001" font-size="13.2" fill="#2b2b2b" textLength="47.3" lengthAdjust="spacingAndGlyphs">(8W-11-2)</text>
<path d="M986.50 706.80 L993.40 713.20 L1000.30 706.80" stroke="#2a2a2a" stroke-width="1.25" fill="none"/>
<text x="970" y="716.9" font-size="13.2" fill="#2b2b2b" textLength="11.3" lengthAdjust="spacingAndGlyphs">40</text>
<path d="M993.40 713.20 L993.40 765.00 L1069.10 765.00 L1069.10 773.60" stroke="#2a2a2a" stroke-width="1.25" fill="none"/>
<path d="M986.50 741.00 L993.40 747.00 L1000.30 741.00" stroke="#2a2a2a" stroke-width="1.25" fill="none"/>
<path d="M986.50 747.50 L993.40 753.50 L1000.30 747.50" stroke="#2a2a2a" stroke-width="1.25" fill="none"/>
<path d="M993.60 746.20 L1005.00 724.50 L1086.20 724.50" stroke="#2a2a2a" stroke-width="1.25" fill="none"/>
<text x="975.7" y="753.1" font-size="13.2" fill="#2b2b2b" textLength="5.6" lengthAdjust="spacingAndGlyphs">9</text>
<text x="1005" y="754.5" font-size="16.4" fill="#141414" font-weight="bold" textLength="30.6" lengthAdjust="spacingAndGlyphs">C106</text>
<text x="1092.6" y="729.8" font-size="13.2" fill="#2b2b2b" textLength="23" lengthAdjust="spacingAndGlyphs">T141</text>
<text x="1130" y="729.8" font-size="13.2" fill="#2b2b2b" textLength="41" lengthAdjust="spacingAndGlyphs">14YL/RD</text>
<path d="M1196.00 724.20 L1309.00 724.20 L1309.00 706.80" stroke="#2a2a2a" stroke-width="1.25" fill="none"/>
<text x="1069.1" y="789.9" font-size="13.2" fill="#2b2b2b" text-anchor="middle" textLength="23" lengthAdjust="spacingAndGlyphs">T141</text>
<text x="1069.1" y="805.1" font-size="13.2" fill="#2b2b2b" text-anchor="middle" textLength="9.6" lengthAdjust="spacingAndGlyphs">14</text>
<text x="1069.1" y="820.2" font-size="13.2" fill="#2b2b2b" text-anchor="middle" textLength="30.7" lengthAdjust="spacingAndGlyphs">YL/RD</text>
<path d="M1069.10 825.40 L1069.10 837.00" stroke="#2a2a2a" stroke-width="1.25" fill="none"/>
<path d="M1062.50 843.00 L1069.10 837.00 L1075.70 843.00" stroke="#2a2a2a" stroke-width="1.25" fill="none"/>
<text x="1039.3" y="839.4" font-size="13.2" fill="#2b2b2b" textLength="12.7" lengthAdjust="spacingAndGlyphs">B5</text>
<rect x="1016.2" y="847.7" width="545.50" height="76.10" fill="none" stroke="#111" stroke-width="2.3"/>
<path d="M1062.20 854.70 L1068.90 848.30 L1075.60 854.70" stroke="#2a2a2a" stroke-width="1.25" fill="none"/>
<path d="M1068.90 848.30 L1068.90 912.30" stroke="#2a2a2a" stroke-width="1.25" fill="none"/>
<circle cx="1068.9" cy="859.5" r="3.2" fill="#2e2e2e"/>
<circle cx="1068.9" cy="912.3" r="3.2" fill="#2e2e2e"/>
<path d="M1068.9 859.5 H1033.7 V864.6 L1038.5 867.8 L1029.2 873 L1038.5 877.7 L1029.2 882.5 L1038.5 887.7 L1029.2 892.8 L1038.5 897.9 L1029.2 902.7 L1034 905.3 V912.3 H1068.9" stroke="#2a2a2a" stroke-width="1.3" fill="none"/>
<rect x="1057.2" y="877.3" width="23.50" height="10.20" fill="#fff" stroke="#2a2a2a" stroke-width="1.4"/>
<path d="M1063.78 887.50 L1074.12 877.30" stroke="#2a2a2a" stroke-width="1.4" fill="none"/>
<path d="M1080.7 882.9 H1529" stroke="#3a3a3a" stroke-width="1.25" fill="none" stroke-dasharray="12.5 7.5"/>
<path d="M1062.20 917.40 L1068.90 923.20 L1075.60 917.40" stroke="#2a2a2a" stroke-width="1.25" fill="none"/>
<path d="M1062.50 929.90 L1069.10 935.60 L1075.70 929.90" stroke="#2a2a2a" stroke-width="1.25" fill="none"/>
<path d="M1069.10 935.60 L1069.10 941.60" stroke="#2a2a2a" stroke-width="1.25" fill="none"/>
<text x="1044.6" y="939.6" font-size="13.2" fill="#2b2b2b" textLength="12.8" lengthAdjust="spacingAndGlyphs">B3</text>
<text x="1069.1" y="954.5" font-size="13.2" fill="#2b2b2b" text-anchor="middle" textLength="16.6" lengthAdjust="spacingAndGlyphs">T41</text>
<text x="1069.1" y="969.4" font-size="13.2" fill="#2b2b2b" text-anchor="middle" textLength="10.2" lengthAdjust="spacingAndGlyphs">20</text>
<text x="1069.1" y="984.3" font-size="13.2" fill="#2b2b2b" text-anchor="middle" textLength="29.9" lengthAdjust="spacingAndGlyphs">BR/LB</text>
<path d="M1513.60 842.50 L1520.20 836.00 L1526.80 842.50" stroke="#2a2a2a" stroke-width="1.25" fill="none"/>
<path d="M1513.60 854.70 L1520.20 848.50 L1526.80 854.70" stroke="#2a2a2a" stroke-width="1.25" fill="none"/>
<path d="M1520.20 848.50 L1520.20 865.30" stroke="#2a2a2a" stroke-width="1.25" fill="none"/>
<circle cx="1520.2" cy="865.3" r="3.3" fill="#2e2e2e"/>
<path d="M1520.20 865.30 L1537.61 895.88" stroke="#2a2a2a" stroke-width="1.25" fill="none"/>
<path d="M1541.82 903.27 L1535.35 897.17 L1539.87 894.60 Z" fill="#1a1a1a"/>
<circle cx="1543.6" cy="906.4" r="3.3" fill="#2e2e2e"/>
<circle cx="1496.7" cy="906.4" r="3.3" fill="#2e2e2e"/>
<path d="M1496.70 906.40 L1496.70 922.80" stroke="#2a2a2a" stroke-width="1.25" fill="none"/>
<path d="M1490.10 917.00 L1496.70 922.80 L1503.30 917.00" stroke="#2a2a2a" stroke-width="1.25" fill="none"/>
<path d="M1490.10 929.90 L1496.70 935.60 L1503.30 929.90" stroke="#2a2a2a" stroke-width="1.25" fill="none"/>
<path d="M1496.70 935.60 L1496.70 955.50" stroke="#2a2a2a" stroke-width="1.25" fill="none"/>
<text x="1473.2" y="939.6" font-size="13.2" fill="#2b2b2b" textLength="12.2" lengthAdjust="spacingAndGlyphs">B2</text>
<text x="1496.9" y="971.6" font-size="13.2" fill="#2b2b2b" text-anchor="middle" textLength="18" lengthAdjust="spacingAndGlyphs">T40</text>
<text x="1496.9" y="986.5" font-size="13.2" fill="#2b2b2b" text-anchor="middle" textLength="10.2" lengthAdjust="spacingAndGlyphs">12</text>
<text x="1496.9" y="1002" font-size="13.2" fill="#2b2b2b" text-anchor="middle" textLength="14" lengthAdjust="spacingAndGlyphs">BR</text>
<text x="1490.3" y="839.4" font-size="13.2" fill="#2b2b2b" textLength="12.2" lengthAdjust="spacingAndGlyphs">B1</text>
<text x="1567.5" y="860.1" font-size="16.4" fill="#141414" font-weight="bold" textLength="49.5" lengthAdjust="spacingAndGlyphs">ENGINE</text>
<text x="1567.5" y="879.2" font-size="16.4" fill="#141414" font-weight="bold" textLength="61.4" lengthAdjust="spacingAndGlyphs">STARTER</text>
<text x="1567.5" y="898" font-size="16.4" fill="#141414" font-weight="bold" textLength="48" lengthAdjust="spacingAndGlyphs">MOTOR</text>
<text x="1567.5" y="917.1" font-size="16.4" fill="#141414" font-weight="bold" textLength="43.7" lengthAdjust="spacingAndGlyphs">RELAY</text>
<text x="1567.5" y="934.2" font-size="16.4" fill="#141414" font-weight="bold" textLength="52.2" lengthAdjust="spacingAndGlyphs">(IN PDC)</text>
<path d="M1069.10 989.60 L1069.10 1008.00" stroke="#2a2a2a" stroke-width="1.25" fill="none"/>
<path d="M1062.50 1000.40 L1069.10 993.90 L1075.70 1000.40" stroke="#2a2a2a" stroke-width="1.25" fill="none"/>
<path d="M1062.50 1006.40 L1069.10 999.90 L1075.70 1006.40" stroke="#2a2a2a" stroke-width="1.25" fill="none"/>
<text x="1052" y="1005.3" font-size="13.2" fill="#2b2b2b" textLength="5.4" lengthAdjust="spacingAndGlyphs">5</text>
<text x="1081.3" y="1006.8" font-size="16.4" fill="#141414" font-weight="bold" textLength="30.4" lengthAdjust="spacingAndGlyphs">C104</text>
<circle cx="1069.1" cy="1018" r="4.7" fill="#2a2a2a"/>
<text x="1081.3" y="1024.5" font-size="16.4" fill="#141414" font-weight="bold" textLength="30" lengthAdjust="spacingAndGlyphs">S134</text>
<text x="1080.8" y="1039.9" font-size="13.2" fill="#2b2b2b" textLength="53" lengthAdjust="spacingAndGlyphs">(8W-15-12)</text>
<text x="1080.8" y="1055.1000000000001" font-size="13.2" fill="#2b2b2b" textLength="53" lengthAdjust="spacingAndGlyphs">(8W-15-13)</text>
<text x="1080.8" y="1070.3" font-size="13.2" fill="#2b2b2b" textLength="53" lengthAdjust="spacingAndGlyphs">(8W-15-14)</text>
<path d="M1069.10 1029.30 L1069.10 1076.60" stroke="#2a2a2a" stroke-width="1.25" fill="none"/>
<path d="M1010.00 1094.30 L1015.80 1087.90 L1063.20 1087.90 L1069.10 1082.40 L1075.00 1087.90 L1203.90 1087.90 L1209.80 1094.30" stroke="#2a2a2a" stroke-width="1.25" fill="none"/>
<text x="1020.5" y="1083.1" font-size="13.2" fill="#2b2b2b" textLength="16.2" lengthAdjust="spacingAndGlyphs">A/T</text>
<text x="1180.4" y="1083.1" font-size="13.2" fill="#2b2b2b" textLength="17.6" lengthAdjust="spacingAndGlyphs">M/T</text>
<path d="M1021.70 1095.40 L1021.70 1149.00" stroke="#2a2a2a" stroke-width="1.25" fill="none"/>
<path d="M1014.80 1118.20 L1021.70 1111.80 L1028.60 1118.20" stroke="#2a2a2a" stroke-width="1.25" fill="none"/>
<path d="M1014.80 1123.40 L1021.70 1117.00 L1028.60 1123.40" stroke="#2a2a2a" stroke-width="1.25" fill="none"/>
<text x="1005" y="1122.6" font-size="13.2" fill="#2b2b2b" textLength="5.5" lengthAdjust="spacingAndGlyphs">3</text>
<text x="1034.3" y="1124.1" font-size="16.4" fill="#141414" font-weight="bold" textLength="30.5" lengthAdjust="spacingAndGlyphs">C154</text>
<text x="1021.9" y="1164.8" font-size="13.2" fill="#2b2b2b" text-anchor="middle" textLength="17" lengthAdjust="spacingAndGlyphs">T41</text>
<text x="1021.9" y="1180.1" font-size="13.2" fill="#2b2b2b" text-anchor="middle" textLength="10.2" lengthAdjust="spacingAndGlyphs">20</text>
<text x="1021.9" y="1195.1" font-size="13.2" fill="#2b2b2b" text-anchor="middle" textLength="30.2" lengthAdjust="spacingAndGlyphs">BR/LB</text>
<path d="M1021.70 1199.90 L1021.70 1252.60" stroke="#2a2a2a" stroke-width="1.25" fill="none"/>
<path d="M1015.10 1258.60 L1021.70 1252.60 L1028.30 1258.60" stroke="#2a2a2a" stroke-width="1.25" fill="none"/>
<text x="1003" y="1255.4" font-size="13.2" fill="#2b2b2b" textLength="5.4" lengthAdjust="spacingAndGlyphs">2</text>
<path d="M1197.80 1093.70 L1197.80 1125.60" stroke="#2a2a2a" stroke-width="1.25" fill="none"/>
<path d="M1190.90 1112.00 L1197.80 1105.80 L1204.70 1112.00" stroke="#2a2a2a" stroke-width="1.25" fill="none"/>
<path d="M1190.90 1117.40 L1197.80 1111.20 L1204.70 1117.40" stroke="#2a2a2a" stroke-width="1.25" fill="none"/>
<text x="1181" y="1117.2" font-size="13.2" fill="#2b2b2b" textLength="5.4" lengthAdjust="spacingAndGlyphs">3</text>
<text x="1209.8" y="1118.3" font-size="16.4" fill="#141414" font-weight="bold" textLength="30.9" lengthAdjust="spacingAndGlyphs">C154</text>
<text x="1197.5" y="1141.7" font-size="13.2" fill="#2b2b2b" text-anchor="middle" textLength="11.7" lengthAdjust="spacingAndGlyphs">Z1</text>
<text x="1197.5" y="1157.1" font-size="13.2" fill="#2b2b2b" text-anchor="middle" textLength="10.2" lengthAdjust="spacingAndGlyphs">20</text>
<text x="1197.5" y="1172.1" font-size="13.2" fill="#2b2b2b" text-anchor="middle" textLength="14" lengthAdjust="spacingAndGlyphs">BK</text>
<text x="1215.8" y="1136" font-size="16.4" fill="#141414" font-weight="bold" textLength="55.9" lengthAdjust="spacingAndGlyphs">MANUAL</text>
<text x="1215.8" y="1154.5" font-size="16.4" fill="#141414" font-weight="bold" textLength="99.6" lengthAdjust="spacingAndGlyphs">TRANSMISSION</text>
<text x="1215.8" y="1173.7" font-size="16.4" fill="#141414" font-weight="bold" textLength="53.7" lengthAdjust="spacingAndGlyphs">JUMPER</text>
<path d="M1197.80 1176.40 L1197.80 1205.20 L1321.10 1205.20 L1321.10 1164.50 L1403.30 1164.50 L1403.30 1182.20" stroke="#2a2a2a" stroke-width="1.25" fill="none"/>
<path d="M1190.90 1181.00 L1197.80 1187.00 L1204.70 1181.00" stroke="#2a2a2a" stroke-width="1.25" fill="none"/>
<path d="M1190.90 1187.50 L1197.80 1193.50 L1204.70 1187.50" stroke="#2a2a2a" stroke-width="1.25" fill="none"/>
<text x="1181.7" y="1193.6" font-size="13.2" fill="#2b2b2b" textLength="4.7" lengthAdjust="spacingAndGlyphs">1</text>
<text x="1209.8" y="1194.4" font-size="16.4" fill="#141414" font-weight="bold" textLength="30.9" lengthAdjust="spacingAndGlyphs">C154</text>
<text x="1340" y="1176.9" font-size="13.2" fill="#2b2b2b" textLength="20" lengthAdjust="spacingAndGlyphs">2.5L</text>
<text x="1339.5" y="1191.8" font-size="13.2" fill="#2b2b2b" textLength="22.8" lengthAdjust="spacingAndGlyphs">RHD</text>
<text x="1435.7" y="1162.4" font-size="13.2" fill="#2b2b2b" textLength="41.2" lengthAdjust="spacingAndGlyphs">EXCEPT</text>
<text x="1445.5" y="1178" font-size="13.2" fill="#2b2b2b" textLength="20.7" lengthAdjust="spacingAndGlyphs">2.5L</text>
<text x="1444.9" y="1192.9" font-size="13.2" fill="#2b2b2b" textLength="22.4" lengthAdjust="spacingAndGlyphs">RHD</text>
<path d="M1344.40 1199.60 L1350.40 1193.60 L1397.30 1193.60 L1403.30 1187.90 L1409.30 1193.60 L1455.50 1193.60 L1462.00 1199.60" stroke="#2a2a2a" stroke-width="1.25" fill="none"/>
<path d="M1350.40 1198.60 L1350.40 1201.20" stroke="#2a2a2a" stroke-width="1.4" fill="none"/>
<path d="M1455.50 1198.60 L1455.50 1201.20" stroke="#2a2a2a" stroke-width="1.4" fill="none"/>
<text x="1350.5" y="1218.4" font-size="13.2" fill="#2b2b2b" text-anchor="middle" textLength="11.8" lengthAdjust="spacingAndGlyphs">Z1</text>
<text x="1350.5" y="1233.8" font-size="13.2" fill="#2b2b2b" text-anchor="middle" textLength="10.2" lengthAdjust="spacingAndGlyphs">18</text>
<text x="1350.5" y="1248.9" font-size="13.2" fill="#2b2b2b" text-anchor="middle" textLength="14" lengthAdjust="spacingAndGlyphs">BK</text>
<text x="1455.6" y="1218.4" font-size="13.2" fill="#2b2b2b" text-anchor="middle" textLength="11.8" lengthAdjust="spacingAndGlyphs">Z1</text>
<text x="1455.6" y="1233.8" font-size="13.2" fill="#2b2b2b" text-anchor="middle" textLength="10.2" lengthAdjust="spacingAndGlyphs">20</text>
<text x="1455.6" y="1248.9" font-size="13.2" fill="#2b2b2b" text-anchor="middle" textLength="14" lengthAdjust="spacingAndGlyphs">BK</text>
<path d="M1350.40 1253.60 L1350.40 1270.40" stroke="#2a2a2a" stroke-width="1.25" fill="none"/>
<path d="M1455.50 1253.60 L1455.50 1270.40" stroke="#2a2a2a" stroke-width="1.25" fill="none"/>
<path d="M1344.40 1270.40 L1350.40 1275.70 L1397.20 1275.70 L1403.20 1281.20 L1409.20 1275.70 L1455.50 1275.70 L1462.00 1270.40" stroke="#2a2a2a" stroke-width="1.25" fill="none"/>
<path d="M1403.20 1287.20 L1403.20 1293.70 L1321.10 1293.70 L1321.10 1258.60 L1197.60 1258.60 L1197.60 1270.00" stroke="#2a2a2a" stroke-width="1.25" fill="none"/>
<path d="M992.40 1264.00 L1006.70 1264.00 M1013.30 1264.00 L1027.60 1264.00 M1034.20 1264.00 L1048.50 1264.00 M1055.10 1264.00 L1069.40 1264.00" stroke="#111" stroke-width="2.2" fill="none" stroke-linecap="square"/>
<path d="M1069.40 1264.00 L1069.40 1278.30 M1069.40 1285.03 L1069.40 1299.33 M1069.40 1306.07 L1069.40 1320.37 M1069.40 1327.10 L1069.40 1341.40" stroke="#111" stroke-width="2.2" fill="none" stroke-linecap="square"/>
<path d="M1069.40 1341.40 L1055.10 1341.40 M1048.50 1341.40 L1034.20 1341.40 M1027.60 1341.40 L1013.30 1341.40 M1006.70 1341.40 L992.40 1341.40" stroke="#111" stroke-width="2.2" fill="none" stroke-linecap="square"/>
<path d="M992.40 1341.40 L992.40 1327.10 M992.40 1320.37 L992.40 1306.07 M992.40 1299.33 L992.40 1285.03 M992.40 1278.30 L992.40 1264.00" stroke="#111" stroke-width="2.2" fill="none" stroke-linecap="square"/>
<path d="M1015.20 1271.00 L1021.80 1264.60 L1028.40 1271.00" stroke="#2a2a2a" stroke-width="1.25" fill="none"/>
<path d="M1021.80 1264.60 L1021.80 1282.00" stroke="#2a2a2a" stroke-width="1.25" fill="none"/>
<circle cx="1021.8" cy="1282" r="3.3" fill="#2e2e2e"/>
<path d="M1021.80 1282.00 L1009.75 1310.27" stroke="#2a2a2a" stroke-width="1.25" fill="none"/>
<path d="M1006.41 1318.09 L1007.35 1309.25 L1012.14 1311.29 Z" fill="#1a1a1a"/>
<circle cx="1005" cy="1321.4" r="3.3" fill="#2e2e2e"/>
<circle cx="1039" cy="1321.4" r="3.3" fill="#2e2e2e"/>
<path d="M1039.00 1321.40 L1039.00 1340.00" stroke="#2a2a2a" stroke-width="1.25" fill="none"/>
<circle cx="1039" cy="1339.5" r="4.8" fill="#2a2a2a"/>
<path d="M1030.00 1346.00 L1048.00 1346.00" stroke="#111" stroke-width="2.4" fill="none"/>
<text x="1034" y="1288.2" font-size="13.2" fill="#2b2b2b" textLength="17" lengthAdjust="spacingAndGlyphs">P/N</text>
<text x="1075" y="1276.1" font-size="16.4" fill="#141414" font-weight="bold" textLength="40" lengthAdjust="spacingAndGlyphs">PARK/</text>
<text x="1075" y="1295.1" font-size="16.4" fill="#141414" font-weight="bold" textLength="62" lengthAdjust="spacingAndGlyphs">NEUTRAL</text>
<text x="1075" y="1314.1" font-size="16.4" fill="#141414" font-weight="bold" textLength="62" lengthAdjust="spacingAndGlyphs">POSITION</text>
<text x="1075" y="1333.1" font-size="16.4" fill="#141414" font-weight="bold" textLength="51" lengthAdjust="spacingAndGlyphs">SWITCH</text>
<circle cx="1197.6" cy="1282" r="4.7" fill="#2a2a2a"/>
<text x="1210" y="1288.2" font-size="16.4" fill="#141414" font-weight="bold" textLength="30" lengthAdjust="spacingAndGlyphs">S132</text>
<path d="M1197.60 1293.40 L1197.60 1296.00" stroke="#2a2a2a" stroke-width="1.25" fill="none"/>
<text x="1197.6" y="1312.1" font-size="13.2" fill="#2b2b2b" text-anchor="middle" textLength="11" lengthAdjust="spacingAndGlyphs">Z1</text>
<text x="1197.6" y="1327.1" font-size="13.2" fill="#2b2b2b" text-anchor="middle" textLength="9.6" lengthAdjust="spacingAndGlyphs">14</text>
<text x="1197.6" y="1342.1" font-size="13.2" fill="#2b2b2b" text-anchor="middle" textLength="13.4" lengthAdjust="spacingAndGlyphs">BK</text>
<path d="M1197.60 1347.00 L1197.60 1354.00" stroke="#2a2a2a" stroke-width="1.25" fill="none"/>
<circle cx="1197.9" cy="1364.2" r="4.8" fill="#2a2a2a"/>
<path d="M1188.90 1369.60 L1206.90 1369.60" stroke="#111" stroke-width="2.4" fill="none"/>
<text x="1210" y="1370.1" font-size="16.4" fill="#141414" font-weight="bold" textLength="31.4" lengthAdjust="spacingAndGlyphs">G105</text>
<text x="1209.6" y="1303.7" font-size="13.2" fill="#2b2b2b" textLength="52.8" lengthAdjust="spacingAndGlyphs">(8W-15-12)</text>
<text x="1209.6" y="1318.9" font-size="13.2" fill="#2b2b2b" textLength="52.8" lengthAdjust="spacingAndGlyphs">(8W-15-13)</text>
<text x="1209.6" y="1334.1000000000001" font-size="13.2" fill="#2b2b2b" textLength="52.8" lengthAdjust="spacingAndGlyphs">(8W-15-14)</text>
<text x="1209.6" y="1385.9" font-size="13.2" fill="#2b2b2b" textLength="52.8" lengthAdjust="spacingAndGlyphs">(8W-15-14)</text>
<text x="958" y="1388" font-size="13.2" fill="#2b2b2b" textLength="41" lengthAdjust="spacingAndGlyphs">J008W-5</text>
<path d="M1438.00 290.60 L1438.00 285.10 L1690.60 285.10 L1690.60 433.30" stroke="#2a2a2a" stroke-width="1.25" fill="none"/>
<path d="M1408.80 302.60 L1423.10 302.60 M1430.93 302.60 L1445.23 302.60 M1453.07 302.60 L1467.37 302.60 M1475.20 302.60 L1489.50 302.60 M1497.33 302.60 L1511.63 302.60 M1519.47 302.60 L1533.77 302.60 M1541.60 302.60 L1555.90 302.60" stroke="#111" stroke-width="2.2" fill="none" stroke-linecap="square"/>
<path d="M1555.90 302.60 L1555.90 316.90 M1555.90 323.23 L1555.90 337.53 M1555.90 343.86 L1555.90 358.16 M1555.90 364.49 L1555.90 378.79 M1555.90 385.11 L1555.90 399.41 M1555.90 405.74 L1555.90 420.04 M1555.90 426.37 L1555.90 440.67 M1555.90 447.00 L1555.90 461.30" stroke="#111" stroke-width="2.2" fill="none" stroke-linecap="square"/>
<path d="M1555.90 461.30 L1541.60 461.30 M1533.77 461.30 L1519.47 461.30 M1511.63 461.30 L1497.33 461.30 M1489.50 461.30 L1475.20 461.30 M1467.37 461.30 L1453.07 461.30 M1445.23 461.30 L1430.93 461.30 M1423.10 461.30 L1408.80 461.30" stroke="#111" stroke-width="2.2" fill="none" stroke-linecap="square"/>
<path d="M1408.80 461.30 L1408.80 447.00 M1408.80 440.67 L1408.80 426.37 M1408.80 420.04 L1408.80 405.74 M1408.80 399.41 L1408.80 385.11 M1408.80 378.79 L1408.80 364.49 M1408.80 358.16 L1408.80 343.86 M1408.80 337.53 L1408.80 323.23 M1408.80 316.90 L1408.80 302.60" stroke="#111" stroke-width="2.2" fill="none" stroke-linecap="square"/>
<circle cx="1438" cy="297" r="6.3" fill="#fff" stroke="#2a2a2a" stroke-width="1.5"/>
<path d="M1438.00 303.50 L1438.00 343.10" stroke="#2a2a2a" stroke-width="1.25" fill="none"/>
<circle cx="1438" cy="314.3" r="3.3" fill="#2e2e2e"/>
<path d="M1438.00 314.30 L1470.00 314.30" stroke="#2a2a2a" stroke-width="1.25" fill="none"/>
<path d="M1469.00 309.70 L1480.60 314.40 L1469.00 319.10 Z" fill="#1a1a1a"/>
<path d="M1431.40 326.60 L1438.00 320.30 L1444.60 326.60" stroke="#2a2a2a" stroke-width="1.25" fill="none"/>
<path d="M1431.40 333.00 L1438.00 326.70 L1444.60 333.00" stroke="#2a2a2a" stroke-width="1.25" fill="none"/>
<rect x="1426.1" y="343.1" width="24.00" height="41.20" fill="#fff" stroke="#2a2a2a" stroke-width="1.3"/>
<path d="M1438.1 343.1 V350.516 C1445.1 355.46000000000004 1445.1 362.87600000000003 1438.1 363.70000000000005 C1431.1 364.524 1431.1 371.94 1438.1 376.884 V384.3" stroke="#2a2a2a" stroke-width="1.3" fill="none"/>
<path d="M1438.00 384.30 L1438.00 443.00 L1520.20 443.00 L1520.20 503.60" stroke="#2a2a2a" stroke-width="1.25" fill="none"/>
<path d="M1431.40 395.00 L1438.00 401.30 L1444.60 395.00" stroke="#2a2a2a" stroke-width="1.25" fill="none"/>
<path d="M1431.40 401.40 L1438.00 407.70 L1444.60 401.40" stroke="#2a2a2a" stroke-width="1.25" fill="none"/>
<text x="1421.5" y="406.8" font-size="13.2" fill="#2b2b2b" textLength="5.2" lengthAdjust="spacingAndGlyphs">8</text>
<text x="1456" y="353.5" font-size="13.2" fill="#2b2b2b" textLength="27.4" lengthAdjust="spacingAndGlyphs">FUSE</text>
<text x="1456" y="368.4" font-size="13.2" fill="#2b2b2b" textLength="5.5" lengthAdjust="spacingAndGlyphs">8</text>
<text x="1456" y="384.4" font-size="13.2" fill="#2b2b2b" textLength="18.5" lengthAdjust="spacingAndGlyphs">40A</text>
<text x="1456" y="398.7" font-size="13.2" fill="#2b2b2b" textLength="53" lengthAdjust="spacingAndGlyphs">(8W-10-12)</text>
<text x="1561.6" y="314.7" font-size="16.4" fill="#141414" font-weight="bold" textLength="49" lengthAdjust="spacingAndGlyphs">POWER</text>
<text x="1561.6" y="333.2" font-size="16.4" fill="#141414" font-weight="bold" textLength="92.8" lengthAdjust="spacingAndGlyphs">DISTRIBUTION</text>
<text x="1561.6" y="352.4" font-size="16.4" fill="#141414" font-weight="bold" textLength="53.3" lengthAdjust="spacingAndGlyphs">CENTER</text>
<text x="1561.6" y="368.7" font-size="13.2" fill="#2b2b2b" textLength="47" lengthAdjust="spacingAndGlyphs">(8W-10-2)</text>
<text x="1520.5" y="520.1" font-size="13.2" fill="#2b2b2b" text-anchor="middle" textLength="13" lengthAdjust="spacingAndGlyphs">A2</text>
<text x="1520.5" y="535.6" font-size="13.2" fill="#2b2b2b" text-anchor="middle" textLength="10.5" lengthAdjust="spacingAndGlyphs">12</text>
<text x="1520.5" y="551.1" font-size="13.2" fill="#2b2b2b" text-anchor="middle" textLength="31" lengthAdjust="spacingAndGlyphs">PK/BK</text>
<path d="M1520.20 561.80 L1520.20 572.90" stroke="#2a2a2a" stroke-width="1.25" fill="none"/>
<circle cx="1520.2" cy="584" r="4.7" fill="#2a2a2a"/>
<path d="M1530.80 584.00 L1597.30 584.00" stroke="#1a1a1a" stroke-width="2.3" fill="none"/>
<circle cx="1608" cy="584" r="4.7" fill="#2a2a2a"/>
<text x="1620.4" y="590.1" font-size="16.4" fill="#141414" font-weight="bold" textLength="29.2" lengthAdjust="spacingAndGlyphs">S111</text>
<text x="1620.4" y="606.5" font-size="13.2" fill="#2b2b2b" textLength="52.6" lengthAdjust="spacingAndGlyphs">(8W-10-12)</text>
<path d="M1520.20 594.20 L1520.20 715.70" stroke="#2a2a2a" stroke-width="1.25" fill="none"/>
<text x="1520.5" y="731.1" font-size="13.2" fill="#2b2b2b" text-anchor="middle" textLength="13" lengthAdjust="spacingAndGlyphs">A2</text>
<text x="1520.5" y="746.6" font-size="13.2" fill="#2b2b2b" text-anchor="middle" textLength="10.5" lengthAdjust="spacingAndGlyphs">12</text>
<text x="1520.5" y="762" font-size="13.2" fill="#2b2b2b" text-anchor="middle" textLength="31" lengthAdjust="spacingAndGlyphs">PK/BK</text>
<path d="M1520.20 767.20 L1520.20 836.00" stroke="#2a2a2a" stroke-width="1.25" fill="none"/>
<path d="M1608.00 594.00 L1608.00 604.40" stroke="#2a2a2a" stroke-width="1.25" fill="none"/>
<text x="1608.5" y="619.9" font-size="13.2" fill="#2b2b2b" text-anchor="middle" textLength="13" lengthAdjust="spacingAndGlyphs">A2</text>
<text x="1608.5" y="634.8" font-size="13.2" fill="#2b2b2b" text-anchor="middle" textLength="10.5" lengthAdjust="spacingAndGlyphs">12</text>
<text x="1608.5" y="650.1" font-size="13.2" fill="#2b2b2b" text-anchor="middle" textLength="30.5" lengthAdjust="spacingAndGlyphs">PK/BK</text>
<path d="M1608.00 655.60 L1608.00 685.90" stroke="#2a2a2a" stroke-width="1.25" fill="none"/>
<path d="M1601.10 673.00 L1608.00 666.70 L1614.90 673.00" stroke="#2a2a2a" stroke-width="1.25" fill="none"/>
<path d="M1601.10 678.30 L1608.00 672.00 L1614.90 678.30" stroke="#2a2a2a" stroke-width="1.25" fill="none"/>
<text x="1591" y="677.4" font-size="13.2" fill="#2b2b2b" textLength="6" lengthAdjust="spacingAndGlyphs">6</text>
<text x="1620.4" y="678.5" font-size="16.4" fill="#141414" font-weight="bold" textLength="30.6" lengthAdjust="spacingAndGlyphs">C106</text>
<text x="1608.5" y="701.8" font-size="13.2" fill="#2b2b2b" text-anchor="middle" textLength="13" lengthAdjust="spacingAndGlyphs">A2</text>
<text x="1608.5" y="716.8" font-size="13.2" fill="#2b2b2b" text-anchor="middle" textLength="10.5" lengthAdjust="spacingAndGlyphs">12</text>
<text x="1608.5" y="732.1" font-size="13.2" fill="#2b2b2b" text-anchor="middle" textLength="30.5" lengthAdjust="spacingAndGlyphs">PK/BK</text>
<path d="M1608.30 737.30 L1608.30 750.00" stroke="#2a2a2a" stroke-width="1.25" fill="none"/>
<path d="M1603.30 749.70 L1613.30 749.70 L1608.30 760.80 Z" fill="#1a1a1a"/>
<text x="1608.5" y="777.1" font-size="13.2" fill="#2b2b2b" text-anchor="middle" textLength="14" lengthAdjust="spacingAndGlyphs">TO</text>
<text x="1608" y="795.6" font-size="16.4" fill="#141414" font-weight="bold" text-anchor="middle" textLength="57.6" lengthAdjust="spacingAndGlyphs">IGNITION</text>
<text x="1608" y="814.1" font-size="16.4" fill="#141414" font-weight="bold" text-anchor="middle" textLength="50.8" lengthAdjust="spacingAndGlyphs">SWITCH</text>
<text x="1606.2" y="830.1" font-size="13.2" fill="#2b2b2b" text-anchor="middle" textLength="52.7" lengthAdjust="spacingAndGlyphs">(8W-10-13)</text>
<text x="1690.5" y="449.4" font-size="13.2" fill="#2b2b2b" text-anchor="middle" textLength="13" lengthAdjust="spacingAndGlyphs">A0</text>
<text x="1690.5" y="465.4" font-size="13.2" fill="#2b2b2b" text-anchor="middle" textLength="5.5" lengthAdjust="spacingAndGlyphs">6</text>
<text x="1690.5" y="480.6" font-size="13.2" fill="#2b2b2b" text-anchor="middle" textLength="14.3" lengthAdjust="spacingAndGlyphs">RD</text>
<path d="M1690.10 485.90 L1690.10 700.30" stroke="#2a2a2a" stroke-width="1.25" fill="none"/>
<path d="M1655.00 1114.00 L1655.00 683.70 L1666.60 683.70 L1689.30 700.50" stroke="#2a2a2a" stroke-width="1.5" fill="none"/>
<rect x="1671.5" y="712.2" width="37.80" height="106.20" fill="none" stroke="#111" stroke-width="2.5"/>
<circle cx="1690.1" cy="706.6" r="6.3" fill="#fff" stroke="#2a2a2a" stroke-width="1.5"/>
<circle cx="1690.1" cy="824.3" r="6.3" fill="#fff" stroke="#2a2a2a" stroke-width="1.5"/>
<path d="M1690.10 712.20 L1690.10 729.90" stroke="#2a2a2a" stroke-width="1.25" fill="none"/>
<path d="M1690.10 801.30 L1690.10 818.40" stroke="#2a2a2a" stroke-width="1.25" fill="none"/>
<path d="M1677.30 729.90 L1704.00 729.90" stroke="#2a2a2a" stroke-width="1.35" fill="none"/>
<path d="M1677.30 742.90 L1704.00 742.90" stroke="#2a2a2a" stroke-width="1.35" fill="none"/>
<path d="M1677.30 756.10 L1704.00 756.10" stroke="#2a2a2a" stroke-width="1.35" fill="none"/>
<path d="M1677.30 768.90 L1704.00 768.90" stroke="#2a2a2a" stroke-width="1.35" fill="none"/>
<path d="M1677.30 782.10 L1704.00 782.10" stroke="#2a2a2a" stroke-width="1.35" fill="none"/>
<path d="M1677.30 794.90 L1704.00 794.90" stroke="#2a2a2a" stroke-width="1.35" fill="none"/>
<path d="M1683.70 736.50 L1697.10 736.50" stroke="#2a2a2a" stroke-width="1.35" fill="none"/>
<path d="M1683.70 749.70 L1697.10 749.70" stroke="#2a2a2a" stroke-width="1.35" fill="none"/>
<path d="M1683.70 762.50 L1697.10 762.50" stroke="#2a2a2a" stroke-width="1.35" fill="none"/>
<path d="M1683.70 775.70 L1697.10 775.70" stroke="#2a2a2a" stroke-width="1.35" fill="none"/>
<path d="M1683.70 788.50 L1697.10 788.50" stroke="#2a2a2a" stroke-width="1.35" fill="none"/>
<path d="M1683.70 801.30 L1697.10 801.30" stroke="#2a2a2a" stroke-width="1.35" fill="none"/>
<path d="M1700.8 715.8 V724 M1696.7 719.9 H1704.9" stroke="#2a2a2a" stroke-width="1.3" fill="none"/>
<path d="M1697.00 813.30 L1704.50 813.30" stroke="#2a2a2a" stroke-width="1.3" fill="none"/>
<text x="1714.2" y="725.3" font-size="16.4" fill="#141414" font-weight="bold" textLength="60.8" lengthAdjust="spacingAndGlyphs">BATTERY</text>
<text x="1713.5" y="741.7" font-size="13.2" fill="#2b2b2b" textLength="47.5" lengthAdjust="spacingAndGlyphs">(8W-20-2)</text>
<text x="1655.1" y="1130.1" font-size="13.2" fill="#2b2b2b" text-anchor="middle" textLength="13.2" lengthAdjust="spacingAndGlyphs">A0</text>
<text x="1655.1" y="1145.4" font-size="13.2" fill="#2b2b2b" text-anchor="middle" textLength="5.5" lengthAdjust="spacingAndGlyphs">6</text>
<text x="1655.1" y="1160.9" font-size="13.2" fill="#2b2b2b" text-anchor="middle" textLength="14.5" lengthAdjust="spacingAndGlyphs">RD</text>
<path d="M1655.00 1164.50 L1655.00 1192.80" stroke="#2a2a2a" stroke-width="1.5" fill="none"/>
<path d="M1496.70 1006.20 L1496.70 1018.00" stroke="#2a2a2a" stroke-width="1.25" fill="none"/>
<path d="M1437.80 1035.70 L1443.80 1029.70 L1490.70 1029.70 L1496.70 1024.00 L1502.70 1029.70 L1550.00 1029.70 L1555.80 1035.70" stroke="#2a2a2a" stroke-width="1.25" fill="none"/>
<text x="1446" y="1021.9" font-size="13.2" fill="#2b2b2b" textLength="20.8" lengthAdjust="spacingAndGlyphs">LHD</text>
<text x="1527" y="1021.9" font-size="13.2" fill="#2b2b2b" textLength="22.4" lengthAdjust="spacingAndGlyphs">RHD</text>
<path d="M1449.80 1035.70 L1449.80 1082.60" stroke="#2a2a2a" stroke-width="1.25" fill="none"/>
<path d="M1443.10 1059.50 L1449.80 1053.20 L1456.50 1059.50" stroke="#2a2a2a" stroke-width="1.25" fill="none"/>
<path d="M1443.10 1064.80 L1449.80 1058.50 L1456.50 1064.80" stroke="#2a2a2a" stroke-width="1.25" fill="none"/>
<path d="M1543.60 1035.70 L1543.60 1082.60" stroke="#2a2a2a" stroke-width="1.25" fill="none"/>
<path d="M1536.90 1059.50 L1543.60 1053.20 L1550.30 1059.50" stroke="#2a2a2a" stroke-width="1.25" fill="none"/>
<path d="M1536.90 1064.80 L1543.60 1058.50 L1550.30 1064.80" stroke="#2a2a2a" stroke-width="1.25" fill="none"/>
<text x="1427.8" y="1063.9" font-size="13.2" fill="#2b2b2b" textLength="10.7" lengthAdjust="spacingAndGlyphs">12</text>
<text x="1462" y="1065.4" font-size="16.4" fill="#141414" font-weight="bold" textLength="30.9" lengthAdjust="spacingAndGlyphs">C104</text>
<text x="1526.5" y="1063.9" font-size="13.2" fill="#2b2b2b" textLength="5.8" lengthAdjust="spacingAndGlyphs">6</text>
<text x="1555.8" y="1065.4" font-size="16.4" fill="#141414" font-weight="bold" textLength="30.9" lengthAdjust="spacingAndGlyphs">C104</text>
<path d="M1437.80 1082.00 L1443.80 1087.90 L1490.70 1087.90 L1496.70 1093.70 L1502.70 1087.90 L1550.00 1087.90 L1555.80 1082.00" stroke="#2a2a2a" stroke-width="1.25" fill="none"/>
<path d="M1496.70 1099.40 L1496.70 1128.80" stroke="#2a2a2a" stroke-width="1.25" fill="none"/>
<text x="1496.9" y="1141.7" font-size="13.2" fill="#2b2b2b" text-anchor="middle" textLength="18" lengthAdjust="spacingAndGlyphs">T40</text>
<text x="1496.9" y="1157.1" font-size="13.2" fill="#2b2b2b" text-anchor="middle" textLength="10.2" lengthAdjust="spacingAndGlyphs">12</text>
<text x="1496.9" y="1172.1" font-size="13.2" fill="#2b2b2b" text-anchor="middle" textLength="14" lengthAdjust="spacingAndGlyphs">BR</text>
<path d="M1496.70 1177.20 L1496.70 1192.80" stroke="#2a2a2a" stroke-width="1.25" fill="none"/>
<rect x="1472.8" y="1204.9" width="217.70" height="153.60" fill="none" stroke="#111" stroke-width="2.6"/>
<circle cx="1496.8" cy="1199.6" r="6.4" fill="#fff" stroke="#2a2a2a" stroke-width="1.5"/>
<circle cx="1655.1" cy="1199.6" r="6.4" fill="#fff" stroke="#2a2a2a" stroke-width="1.5"/>
<path d="M1496.80 1206.00 L1496.80 1340.50 L1637.50 1340.50" stroke="#2a2a2a" stroke-width="1.25" fill="none"/>
<circle cx="1496.8" cy="1217.6" r="3.3" fill="#2e2e2e"/>
<path d="M1496.80 1217.60 L1543.60 1217.60 L1543.60 1275.70 L1637.50 1275.70" stroke="#2a2a2a" stroke-width="1.25" fill="none"/>
<rect x="1484.8" y="1235" width="24.00" height="10.70" fill="#fff" stroke="#2a2a2a" stroke-width="1.4"/>
<path d="M1491.52 1245.70 L1502.08 1235.00" stroke="#2a2a2a" stroke-width="1.4" fill="none"/>
<rect x="1531.6" y="1235" width="24.00" height="10.70" fill="#fff" stroke="#2a2a2a" stroke-width="1.4"/>
<path d="M1538.32 1245.70 L1548.88 1235.00" stroke="#2a2a2a" stroke-width="1.4" fill="none"/>
<path d="M1508.8 1240.4 H1531.6 M1555.6 1240.4 H1661.2" stroke="#3a3a3a" stroke-width="1.25" fill="none" stroke-dasharray="12 8"/>
<text x="1480" y="1262.1" font-size="13.2" fill="#2b2b2b" textLength="5.4" lengthAdjust="spacingAndGlyphs">2</text>
<text x="1527.5" y="1262.1" font-size="13.2" fill="#2b2b2b" textLength="4.2" lengthAdjust="spacingAndGlyphs">1</text>
<path d="M1655.20 1206.00 L1655.20 1223.10" stroke="#2a2a2a" stroke-width="1.25" fill="none"/>
<circle cx="1655.2" cy="1223.1" r="3.3" fill="#2e2e2e"/>
<path d="M1655.20 1223.10 L1667.25 1251.37" stroke="#2a2a2a" stroke-width="1.25" fill="none"/>
<path d="M1670.59 1259.19 L1664.86 1252.39 L1669.65 1250.35 Z" fill="#1a1a1a"/>
<circle cx="1672" cy="1262.5" r="3.3" fill="#2e2e2e"/>
<circle cx="1637.9" cy="1262.5" r="3.3" fill="#2e2e2e"/>
<path d="M1637.90 1262.50 L1637.90 1286.50" stroke="#2a2a2a" stroke-width="1.25" fill="none"/>
<circle cx="1637.9" cy="1275.7" r="3.3" fill="#2e2e2e"/>
<rect x="1632.4" y="1286.5" width="10.8" height="6.2" fill="#1a1a1a"/>
<rect x="1632.4" y="1318.9" width="10.8" height="6.2" fill="#1a1a1a"/>
<circle cx="1637.8" cy="1305.9" r="13.8" fill="#fff" stroke="#2a2a2a" stroke-width="1.4"/>
<text x="1637.8" y="1311" font-size="13.2" fill="#2b2b2b" text-anchor="middle" textLength="10" lengthAdjust="spacingAndGlyphs">M</text>
<path d="M1637.90 1325.00 L1637.90 1358.00" stroke="#2a2a2a" stroke-width="1.25" fill="none"/>
<circle cx="1637.9" cy="1340.5" r="3.3" fill="#2e2e2e"/>
<circle cx="1637.9" cy="1357.5" r="4.8" fill="#2a2a2a"/>
<path d="M1628.90 1363.30 L1646.90 1363.30" stroke="#111" stroke-width="2.4" fill="none"/>
<text x="1696.5" y="1218.4" font-size="16.4" fill="#141414" font-weight="bold" textLength="49.5" lengthAdjust="spacingAndGlyphs">ENGINE</text>
<text x="1696.5" y="1237.6" font-size="16.4" fill="#141414" font-weight="bold" textLength="60.7" lengthAdjust="spacingAndGlyphs">STARTER</text>
<text x="1696.5" y="1256.1" font-size="16.4" fill="#141414" font-weight="bold" textLength="48" lengthAdjust="spacingAndGlyphs">MOTOR</text>
<text x="1696.5" y="1274.6" font-size="13.2" fill="#2b2b2b" textLength="48" lengthAdjust="spacingAndGlyphs">1 PULL-IN</text>
<text x="1696.5" y="1289.7" font-size="13.2" fill="#2b2b2b" textLength="51.1" lengthAdjust="spacingAndGlyphs">2 HOLD-IN</text>
<text x="1765" y="1388.1" font-size="13.2" fill="#2b2b2b" textLength="42.6" lengthAdjust="spacingAndGlyphs">TJI02102</text>
<path d="M1309.00 488.60 L1309.00 513.20" stroke="#2a2a2a" stroke-width="1.25" fill="none"/>
<path d="M1209.20 531.30 L1216.20 525.30 L1302.50 525.30 L1309.00 519.60 L1315.50 525.30 L1397.00 525.30 L1403.30 531.30" stroke="#2a2a2a" stroke-width="1.25" fill="none"/>
<text x="1219.4" y="519.7" font-size="13.2" fill="#2b2b2b" textLength="16" lengthAdjust="spacingAndGlyphs">A/T</text>
<text x="1379.4" y="520.1" font-size="13.2" fill="#2b2b2b" textLength="17.9" lengthAdjust="spacingAndGlyphs">M/T</text>
<path d="M1221.60 531.30 L1221.60 583.50" stroke="#2a2a2a" stroke-width="1.25" fill="none"/>
<path d="M1215.20 590.00 L1221.60 583.50 L1228.00 590.00" stroke="#2a2a2a" stroke-width="1.25" fill="none"/>
<text x="1202.4" y="586.8" font-size="13.2" fill="#2b2b2b" textLength="5.3" lengthAdjust="spacingAndGlyphs">2</text>
<text x="1221.6" y="606.1" font-size="13.2" fill="#2b2b2b" text-anchor="middle" textLength="21" lengthAdjust="spacingAndGlyphs">NOT</text>
<text x="1221.8" y="620.9" font-size="13.2" fill="#2b2b2b" text-anchor="middle" textLength="28" lengthAdjust="spacingAndGlyphs">USED</text>
<path d="M1215.20 630.40 L1221.60 636.40 L1228.00 630.40" stroke="#2a2a2a" stroke-width="1.25" fill="none"/>
<path d="M1221.60 636.40 L1221.60 689.70" stroke="#2a2a2a" stroke-width="1.25" fill="none"/>
<text x="1205.6" y="640.1" font-size="13.2" fill="#2b2b2b" textLength="4.2" lengthAdjust="spacingAndGlyphs">1</text>
<text x="1245" y="572.5" font-size="16.4" fill="#141414" font-weight="bold" textLength="52.7" lengthAdjust="spacingAndGlyphs">CLUTCH</text>
<text x="1245" y="591.1" font-size="16.4" fill="#141414" font-weight="bold" textLength="43.7" lengthAdjust="spacingAndGlyphs">PEDAL</text>
<text x="1245" y="610.3" font-size="16.4" fill="#141414" font-weight="bold" textLength="61.8" lengthAdjust="spacingAndGlyphs">POSITION</text>
<text x="1245" y="629.5" font-size="16.4" fill="#141414" font-weight="bold" textLength="51.2" lengthAdjust="spacingAndGlyphs">SWITCH</text>
<text x="1245" y="648.6" font-size="16.4" fill="#141414" font-weight="bold" textLength="83.8" lengthAdjust="spacingAndGlyphs">CONNECTOR</text>
<path d="M1209.20 689.70 L1216.20 695.50 L1302.50 695.50 L1309.00 700.80 L1315.50 695.50 L1415.00 695.50 L1421.40 689.70" stroke="#2a2a2a" stroke-width="1.25" fill="none"/>
<rect x="1362.2" y="565.8" width="70.50" height="77.00" fill="none" stroke="#111" stroke-width="2.4"/>
<path d="M1391.60 531.30 L1391.60 555.40" stroke="#2a2a2a" stroke-width="1.25" fill="none"/>
<path d="M1385.20 561.00 L1391.60 555.40 L1398.00 561.00" stroke="#2a2a2a" stroke-width="1.25" fill="none"/>
<text x="1372.4" y="557.1" font-size="13.2" fill="#2b2b2b" textLength="5.3" lengthAdjust="spacingAndGlyphs">2</text>
<path d="M1385.20 572.90 L1391.60 567.00 L1398.00 572.90" stroke="#2a2a2a" stroke-width="1.25" fill="none"/>
<path d="M1391.60 567.00 L1391.60 584.00" stroke="#2a2a2a" stroke-width="1.25" fill="none"/>
<circle cx="1391.6" cy="584" r="3.3" fill="#2e2e2e"/>
<path d="M1391.60 584.00 L1379.30 612.49" stroke="#2a2a2a" stroke-width="1.25" fill="none"/>
<path d="M1375.93 620.29 L1376.91 611.46 L1381.68 613.52 Z" fill="#1a1a1a"/>
<circle cx="1374.5" cy="623.6" r="3.3" fill="#2e2e2e"/>
<circle cx="1408.6" cy="623.6" r="3.3" fill="#2e2e2e"/>
<path d="M1408.60 623.60 L1408.60 642.20" stroke="#2a2a2a" stroke-width="1.25" fill="none"/>
<path d="M1402.20 635.80 L1408.60 642.20 L1415.00 635.80" stroke="#2a2a2a" stroke-width="1.25" fill="none"/>
<path d="M1402.20 647.50 L1408.60 653.90 L1415.00 647.50" stroke="#2a2a2a" stroke-width="1.25" fill="none"/>
<path d="M1408.60 653.90 L1408.60 689.70" stroke="#2a2a2a" stroke-width="1.25" fill="none"/>
<text x="1392.6" y="658.1" font-size="13.2" fill="#2b2b2b" textLength="4.4" lengthAdjust="spacingAndGlyphs">1</text>
<text x="1438.5" y="578.3" font-size="16.4" fill="#141414" font-weight="bold" textLength="53.3" lengthAdjust="spacingAndGlyphs">CLUTCH</text>
<text x="1438.5" y="597.5" font-size="16.4" fill="#141414" font-weight="bold" textLength="43.7" lengthAdjust="spacingAndGlyphs">PEDAL</text>
<text x="1438.5" y="616.7" font-size="16.4" fill="#141414" font-weight="bold" textLength="61.8" lengthAdjust="spacingAndGlyphs">POSITION</text>
<text x="1438.5" y="635.1" font-size="16.4" fill="#141414" font-weight="bold" textLength="51.2" lengthAdjust="spacingAndGlyphs">SWITCH</text></g>
</g>
</svg>
</body></html>
